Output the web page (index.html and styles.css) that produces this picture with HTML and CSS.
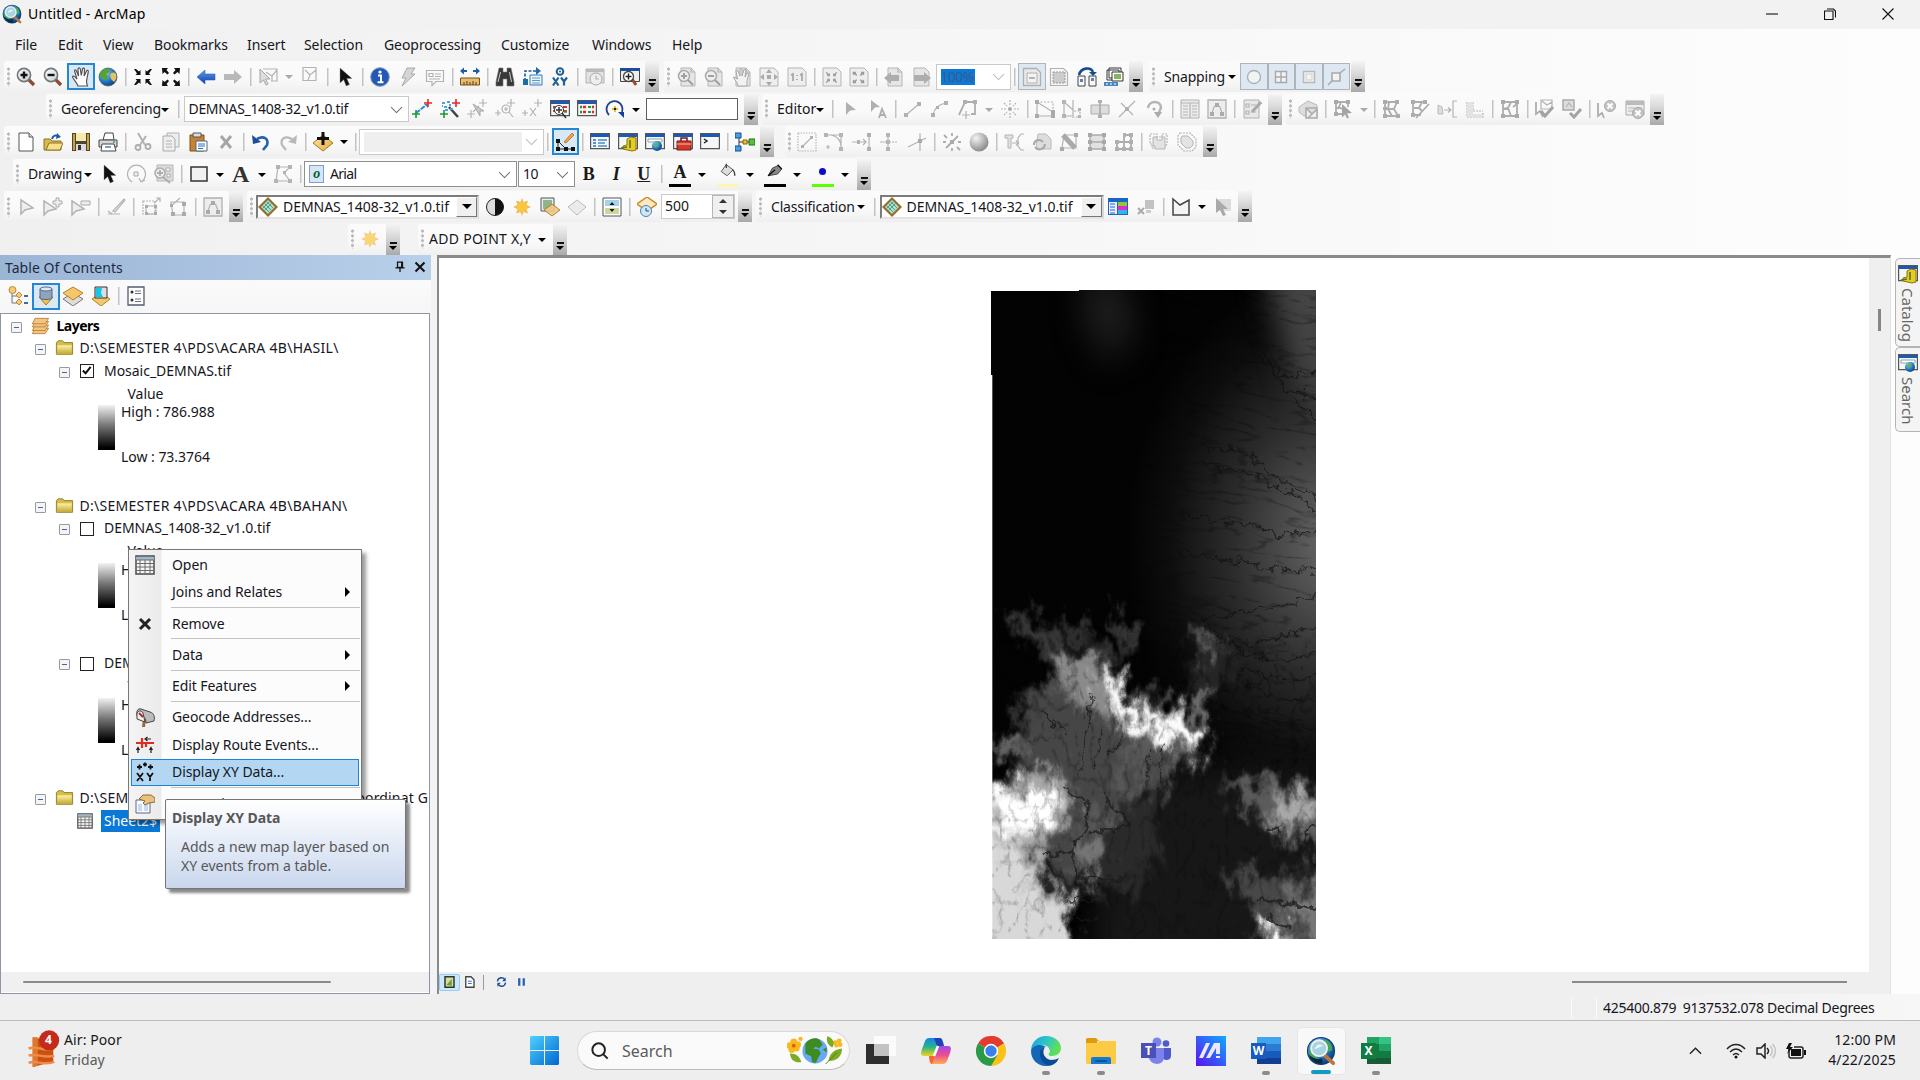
FILE: index.html
```html
<!DOCTYPE html>
<html lang="en">
<head>
<meta charset="utf-8">
<title>Untitled - ArcMap</title>
<link rel="stylesheet" href="styles.css">
</head>
<body>
<svg class="sprite" aria-hidden="true">
<defs>
<linearGradient id="gold" x1="0" y1="0" x2="1" y2="1"><stop offset="0" stop-color="#ffe9a8"/><stop offset="1" stop-color="#e2a93c"/></linearGradient>
<linearGradient id="lens" x1="0" y1="0" x2="1" y2="1"><stop offset="0" stop-color="#fff"/><stop offset="1" stop-color="#c4d0d8"/></linearGradient>
<linearGradient id="fold" x1="0" y1="0" x2="0" y2="1"><stop offset="0" stop-color="#fbf3a8"/><stop offset="1" stop-color="#c9ab36"/></linearGradient>
<radialGradient id="earth" cx=".35" cy=".3" r=".8"><stop offset="0" stop-color="#8fd0f5"/><stop offset=".6" stop-color="#1f70bd"/><stop offset="1" stop-color="#0b3570"/></radialGradient>
<radialGradient id="ball" cx=".35" cy=".3" r=".7"><stop offset="0" stop-color="#f4f4f4"/><stop offset="1" stop-color="#8d8d8d"/></radialGradient>
<linearGradient id="arr" x1="0" y1="0" x2="0" y2="1"><stop offset="0" stop-color="#5f9cf0"/><stop offset="1" stop-color="#0d3fa5"/></linearGradient>
</defs>
<symbol id="zin" viewBox="0 0 20 20"><path d="M12 12l6 6" stroke="#8e4a36" stroke-width="3.4"/><circle cx="8" cy="8" r="6.6" fill="url(#lens)" stroke="#777" stroke-width="1.6"/><path d="M8 4.5v7M4.5 8h7" stroke="#111" stroke-width="2.4"/></symbol>
<symbol id="zout" viewBox="0 0 20 20"><path d="M12 12l6 6" stroke="#8e4a36" stroke-width="3.4"/><circle cx="8" cy="8" r="6.6" fill="url(#lens)" stroke="#777" stroke-width="1.6"/><path d="M4.5 8h7" stroke="#111" stroke-width="2.4"/></symbol>
<symbol id="hand" viewBox="0 0 20 20"><path d="M7 19C6 15 1 11 1.500 9.500c1-1.200 3 .7 4.500 2.500L3.500 4C3.500 2.500 5 2.500 5.500 4l2 5L7 2c.3-1.500 2-1.500 2.300 0l1 6.500L11.500 2c.5-1.500 2-1 2 .3L13.200 9l2.300-5c.8-1.200 2-.6 1.800.7L15.500 14c0 2 .5 3 1 5z" fill="#fff" stroke="#555" stroke-width="1.200"/></symbol>
<symbol id="globe" viewBox="0 0 20 20"><circle cx="10" cy="10" r="9" fill="url(#earth)" stroke="#4d5d6e" stroke-width=".8"/><path d="M3 5c3-4 8-4 9-2l-2 3-2 1 2 2-1 3-3 1c-2-2-4-4-4-7z" fill="#58a32c"/><path d="M12 8c2-3 4-3 6-1 1 3 0 6-2 8l-3-3z" fill="#e4c45c"/></symbol>
<symbol id="fixin" viewBox="0 0 20 20"><path d="M1 2h2l3 2.500L7.500 3v5h-5L4 6.500zM19 2h-2l-3 2.500L12.500 3v5h5L16 6.500zM1 18h2l3-2.500L7.500 17v-5h-5L4 13.500zM19 18h-2l-3-2.500L12.500 17v-5h5L16 13.500z" fill="currentColor"/></symbol>
<symbol id="fixout" viewBox="0 0 20 20"><path d="M1 1h6L5.500 3 8 6 6.500 7.500 3.500 5 1.500 7zM19 1h-6l1.500 2L12 6l1.500 1.500 3-2.500 2 2zM1 19h6l-1.500-2L8 14l-1.500-1.500-3 2.500-2-2zM19 19h-6l1.500-2-2.500-3 1.500-1.500 3 2.500 2-2z" fill="currentColor"/></symbol>
<symbol id="back" viewBox="0 0 20 20"><path d="M1 10l8-7v4h10v6H9v4z" fill="url(#arr)" stroke="#3167bd" stroke-width=".6"/></symbol>
<symbol id="fwd" viewBox="0 0 20 20"><path d="M19 10l-8-7v4H1v6h10v4z" fill="#b9b9b9"/></symbol>
<symbol id="selfeat" viewBox="0 0 20 20"><path d="M5 2h14v12h-6M8 5l6 4 5-6M14 9v5" class="g"/><path d="M2 2v14l3.500-3 2.500 5 2-1-2.500-5H12z" fill="#ddd" stroke="#a5a5a5"/></symbol>
<symbol id="clear" viewBox="0 0 20 20"><path d="M3 .5h13v13H3zM5 3l5 5 6-5M10 8l-2 5" class="g"/></symbol>
<symbol id="cursor" viewBox="0 0 20 20"><path d="M5 1v15l3.700-3.300 2.500 6.300 3.300-1.500-2.700-6H17z" fill="#111" stroke="#888" stroke-width=".4"/></symbol>
<symbol id="info" viewBox="0 0 20 20"><circle cx="10" cy="10" r="9.300" fill="#2358b4" stroke="#7f99c4"/><path d="M8 8.500h3V15M7.500 15.300h6" stroke="#fff" stroke-width="2" fill="none"/><circle cx="10" cy="5" r="1.600" fill="#fff"/></symbol>
<symbol id="bolt" viewBox="0 0 20 20"><path d="M9 1h8l-4 6h4L4 19l4-8H4z" fill="#d5d5d5" stroke="#a9a9a9"/></symbol>
<symbol id="note" viewBox="0 0 20 20"><path d="M1.500 3.500h17v11H11l-4 4v-4H1.500z" class="g" fill="#e4e4e4"/><path d="M4 6.500h4v3H4zM10 7h6M10 9.500h6M4 12h11" class="g"/></symbol>
<symbol id="measure" viewBox="0 0 20 20"><path d="M0 4l4-3.500v2.500h3v2H4v2.500zM20 4l-4-3.500v2.500h-3v2h3v2.500z" fill="#1b5da6"/><path d="M.5 11h19v7H.5z" fill="#e7bd70" stroke="#79501c"/><path d="M4 18v-3M7 18v-4M10 18v-3M13 18v-4M16 18v-3" stroke="#5b3b10"/></symbol>
<symbol id="binoc" viewBox="0 0 20 20"><path d="M4 1h4v4h4V1h4l3 14v4h-7v-7H8v7H1v-4z" fill="#383838" stroke="#777" stroke-width=".6"/><path d="M5.500 5L3 15M14.500 5l2 10" stroke="#ccc"/></symbol>
<symbol id="route" viewBox="0 0 20 20"><path d="M2 14V4h12" fill="none" stroke="#1d5a96" stroke-width="1.600" stroke-dasharray="3 1.500"/><path d="M13 0l5 4-5 4zM0 12h5v6H0z" fill="#1d6ca8"/><path d="M7 8h12v10H7z" fill="#e9f4fb" stroke="#317bb0"/><path d="M9 11h8M9 13.500h8M9 16h8" stroke="#5b9ac0"/></symbol>
<symbol id="goxy" viewBox="0 0 20 20"><circle cx="10" cy="4.500" r="3.300" fill="none" stroke="#1f5f96" stroke-width="2"/><circle cx="10" cy="4.500" r="1" fill="#1f5f96"/><path d="M3 10.500l5.500 8M8.500 10.500l-5.500 8M11 10.500l3 4 3-4M14 14v4.500" stroke="#1f5f96" stroke-width="2.200" fill="none"/></symbol>
<symbol id="clock" viewBox="0 0 20 20"><path d="M1 2h18v14H1z" fill="#e2e2e2" stroke="#b2b2b2"/><path d="M1 2h18v3H1z" fill="#bbb"/><circle cx="11" cy="12" r="6" fill="#eee" stroke="#aaa"/><path d="M11 8.500V12h3" class="g"/></symbol>
<symbol id="viewer" viewBox="0 0 20 20"><path d="M.5 1.500h19v13H.5z" fill="#eee" stroke="#444"/><path d="M0 1h20v3H0z" fill="#1b4f9c"/><path d="M12 12l4 6" stroke="#984b33" stroke-width="3"/><circle cx="8.500" cy="9.500" r="5" fill="#fff" stroke="#444" stroke-width="1.300"/><path d="M8.500 6.500v6M5.500 9.500h6" stroke="#222" stroke-width="1.500"/></symbol>
<symbol id="pg" viewBox="0 0 20 20"><path d="M4 1h10l4 4v14H4z" fill="#e6e6e6" stroke="#b5b5b5"/><path d="M14 1v4h4" class="g"/></symbol>
<symbol id="pgin" viewBox="0 0 20 20"><use href="#pg"/><circle cx="7" cy="9" r="5.500" fill="#eee" stroke="#aaa" stroke-width="1.500"/><path d="M7 6v6M4 9h6M11 13l5 5" stroke="#a0a0a0" stroke-width="2"/></symbol>
<symbol id="pgout" viewBox="0 0 20 20"><use href="#pg"/><circle cx="7" cy="9" r="5.500" fill="#eee" stroke="#aaa" stroke-width="1.500"/><path d="M4 9h6M11 13l5 5" stroke="#a0a0a0" stroke-width="2"/></symbol>
<symbol id="pghand" viewBox="0 0 20 20"><use href="#pg"/><path d="M6 19c0-4-4-6-4.500-9l4 2L4 4l2-.5L8 9V2h2v7l2-6.500 2 .5-1 7 2-4 2 .5-2 7v5.500z" fill="#f2f2f2" stroke="#a8a8a8"/></symbol>
<symbol id="pgfull" viewBox="0 0 20 20"><path d="M1 1h14l4 4v14H1z" fill="#eee" stroke="#b5b5b5"/><path d="M10 2l3 4H7zM10 19l3-4H7zM1 10l4-3v6zM19 10l-4-3v6zM8 8h4v4H8z" fill="#aaa"/></symbol>
<symbol id="pg11" viewBox="0 0 20 20"><path d="M1 1h14l4 4v14H1z" fill="#eee" stroke="#b5b5b5"/><path d="M4 8l2-1v7M10 8v1M10 12v1M13 8l2-1v7" stroke="#a5a5a5" stroke-width="1.700" fill="none"/></symbol>
<symbol id="pgfi" viewBox="0 0 20 20"><path d="M1 1h14l4 4v14H1z" fill="#eee" stroke="#b5b5b5"/><g color="#999"><use href="#fixin" x="3" y="4" width="13" height="13"/></g></symbol>
<symbol id="pgfo" viewBox="0 0 20 20"><path d="M1 1h14l4 4v14H1z" fill="#eee" stroke="#b5b5b5"/><g color="#999"><use href="#fixout" x="3" y="4" width="13" height="13"/></g></symbol>
<symbol id="pgb" viewBox="0 0 20 20"><use href="#pg"/><path d="M0 11l7-6v3h8v6H7v3z" fill="#adadad"/></symbol>
<symbol id="pgf" viewBox="0 0 20 20"><path d="M2 1h11l4 4v14H2z" fill="#e6e6e6" stroke="#b5b5b5"/><path d="M19 11l-7-6v3H2v6h10v3z" fill="#adadad"/></symbol>
<symbol id="draft" viewBox="0 0 20 20"><path d="M1.500 1.500h13l4 4v13h-17z" fill="#e9e9e9" stroke="#b0b0b0" stroke-width="1.300"/><path d="M5 6h10v10H5z" fill="#f3f3f3" stroke="#b0b0b0"/><path d="M7 11h6" class="g2"/></symbol>
<symbol id="focus" viewBox="0 0 20 20"><path d="M1.500 1.500h13l4 4v13h-17z" class="g"/><path d="M4 5h12v11H4z" fill="#ccc" stroke="#999" stroke-dasharray="2 1"/></symbol>
<symbol id="chlay" viewBox="0 0 20 20"><path d="M2 8C4 0 14 0 16 5" fill="none" stroke="#174d8c" stroke-width="2.600"/><path d="M12 5h8l-4 4z" fill="#174d8c"/><path d="M1 9h7v10H1zM12 9h7v10h-7z" fill="#f8f8f8" stroke="#444"/><path d="M3 12h3v3H3zM14 11h3v3h-3z" fill="#5b83ae"/></symbol>
<symbol id="ddp" viewBox="0 0 20 20"><path d="M5 1h12v10H5zM3 3h12v10H3z" fill="#fff" stroke="#333"/><path d="M8 5h11v9H8z" fill="#fff" stroke="#333"/><path d="M10 7h7v5h-7z" fill="#80b65f"/><path d="M0 15h14v4H0z" fill="#4a86c6"/><path d="M2 17h2M6 17h2M10 17h2" stroke="#fff"/></symbol>
<symbol id="sncirc" viewBox="0 0 20 20"><circle cx="10" cy="10" r="6.500" fill="#f1f3f5" stroke="#a9adb0" stroke-width="1.300"/></symbol>
<symbol id="sngrid" viewBox="0 0 20 20"><path d="M4.500 4.500h11v11h-11zM4.500 10h11M10 4.500v11" fill="#f3f3f3" stroke="#a9a9a9" stroke-width="1.400"/></symbol>
<symbol id="snsq" viewBox="0 0 20 20"><path d="M4.500 4.500h11v11h-11z" fill="#f3f3f3" stroke="#b9b9b9" stroke-width="1.500"/><path d="M7 7h6v6H7z" fill="#f3f3f3" stroke="#cfcfcf"/></symbol>
<symbol id="snedge" viewBox="0 0 20 20"><path d="M6 6h8v8H6zM14 6l5-4M6 14l-4 4" fill="#f3f3f3" stroke="#a9a9a9" stroke-width="1.600"/></symbol>
<symbol id="cp" viewBox="0 0 20 20"><path d="M4 14l9-7" stroke="#2f86c8" stroke-width="2" stroke-dasharray="5 1"/><path d="M12 5h4v4z" fill="#2f86c8"/><path d="M0 15h8M4 11v8" stroke="#1a9a30" stroke-width="1.600"/><path d="M12 4h8M16 0v8" stroke="#e52828" stroke-width="1.600"/></symbol>
<symbol id="wand" viewBox="0 0 20 20"><path d="M9 8l9 10" stroke="#444" stroke-width="2.600"/><path d="M2 4h3M7 3h3M4 8h3M9 6h2M5 11h3M10 10h3M2 7h1" stroke="#49a4df" stroke-width="2"/><path d="M0 15h8M4 11v8" stroke="#1a9a30" stroke-width="1.600"/><path d="M12 4h8M16 0v8" stroke="#e52828" stroke-width="1.600"/></symbol>
<symbol id="gcp" viewBox="0 0 20 20"><path d="M0 15h8M4 11v8M12 4h8M16 0v8M6 13l6-6" class="g"/><path d="M6 5l7 12v-5h4z" fill="#c8c8c8" stroke="#aaa"/></symbol>
<symbol id="gcpz" viewBox="0 0 20 20"><path d="M0 14h6M3 11v6M12 4h8M16 0v8" class="g"/><circle cx="11" cy="10" r="4" class="g"/><path d="M9 10h4M11 8v4M14 13l4 5" class="g"/></symbol>
<symbol id="gcpx" viewBox="0 0 20 20"><path d="M0 14h6M3 11v6M12 4h8M16 0v8M8 9l6 8M14 9l-6 8" class="g"/></symbol>
<symbol id="win" viewBox="0 0 20 20"><path d="M.6 1.600h18.800v15H.6z" fill="#f4f6f8" stroke="#555" stroke-width="1.200"/><path d="M1 2h18v3H1z" fill="#1d58b4"/></symbol>
<symbol id="gvz" viewBox="0 0 20 20"><use href="#win"/><path d="M3 8h4M13 8h4M3 12h4M13 12h4" stroke="#d33" stroke-width="2"/><path d="M3 9h3M14 13h3" stroke="#2a2" stroke-width="1.500"/><circle cx="9" cy="11" r="4.500" fill="#fff" stroke="#333"/><path d="M9 8v6M6 11h6M12 14l4 5" stroke="#333" stroke-width="1.500"/></symbol>
<symbol id="gtab" viewBox="0 0 20 20"><use href="#win"/><path d="M3 8h2M3 13h2" stroke="#1a9a30" stroke-width="2.500"/><path d="M6 8h3M6 13h3M15 8h2M15 13h2" stroke="#e22" stroke-width="2.500"/><path d="M11 8h3M11 13h3" stroke="#1a9a30" stroke-width="2"/></symbol>
<symbol id="rot" viewBox="0 0 20 20"><path d="M4 16A8 8 0 1 1 17 13" fill="none" stroke="#24418c" stroke-width="1.800"/><path d="M13 13h6v6z" fill="#123fa0"/><path d="M7 10h6M10 7v6" stroke="#ddb200" stroke-width="1.500"/><path d="M9 9h2v2H9z" fill="#222"/></symbol>
<symbol id="etool" viewBox="0 0 20 20"><path d="M6 3l10 8-6 .5L6 16z" fill="#b0b0b0"/></symbol>
<symbol id="eann" viewBox="0 0 20 20"><path d="M3 1l9 7-5 .5L3 13z" fill="#b0b0b0"/><path d="M11 19l3-9 4 9M12 16h5" class="g2"/></symbol>
<symbol id="line" viewBox="0 0 20 20"><path d="M3 16L16 5" class="g"/><path d="M1 14h4v4H1zM14 3h4v4h-4z" fill="#b0b0b0"/></symbol>
<symbol id="arc" viewBox="0 0 20 20"><path d="M3 16Q5 6 16 4" class="g"/><path d="M1 14h4v4H1zM14 2h4v4h-4zM6 7h3v3H6z" fill="#b0b0b0"/></symbol>
<symbol id="trace" viewBox="0 0 20 20"><path d="M1 16l6-13h10v12h-4" class="g2"/><path d="M8 12v8M4 16h8" class="g"/><path d="M5 1h4v4H5zM15 1h4v4h-4z" fill="#b0b0b0"/></symbol>
<symbol id="point" viewBox="0 0 20 20"><path d="M10 1v5M10 14v5M1 10h5M14 10h5M4 4l3 3M16 4l-3 3M4 16l3-3M16 16l-3-3" class="g" stroke-dasharray="2 1"/><circle cx="10" cy="10" r="2" fill="#aaa"/></symbol>
<symbol id="verts" viewBox="0 0 20 20"><path d="M2 3v14h16V13L2 3" class="g"/><path d="M2 3h16v10" class="g" stroke-dasharray="2 1.500"/><path d="M0 1h4v4H0zM0 15h4v4H0zM16 11h4v4h-4zM16 15h4v4h-4z" fill="#aaa"/></symbol>
<symbol id="resh" viewBox="0 0 20 20"><path d="M2 3v14h8M2 3l9 8M11 1v18" class="g"/><path d="M12 12h6v6h-6" class="g" stroke-dasharray="2 1.500"/><path d="M0 1h4v4H0zM0 15h4v4H0zM16 9h3v3h-3zM16 16h3v3h-3z" fill="#b4b4b4"/></symbol>
<symbol id="cutp" viewBox="0 0 20 20"><path d="M1 6h18v9H1z" fill="#ddd" stroke="#aaa"/><path d="M10 1v18" class="g2"/><path d="M8 1h4v3H8zM8 16h4v3H8z" fill="#b0b0b0"/></symbol>
<symbol id="split" viewBox="0 0 20 20"><path d="M2 18L18 2" class="g"/><path d="M4 4l4 4M12 12l4 4" class="g"/><path d="M8 8h4v4H8z" fill="#b0b0b0"/></symbol>
<symbol id="rotg" viewBox="0 0 20 20"><path d="M3 9C4 1 16 1 16 9l-3 6" fill="none" stroke="#b5b5b5" stroke-width="2.500"/><path d="M9 13h8l-4 6z" fill="#aaa"/><circle cx="9" cy="10" r="1.500" fill="#aaa"/></symbol>
<symbol id="attr" viewBox="0 0 20 20"><path d="M1 1h18v18H1z" fill="#ececec" stroke="#b0b0b0"/><path d="M1 4h18M10 4v15M3 7h5M3 10h5M3 13h5M3 16h5M12 7h5M12 10h5M12 13h5M12 16h5" class="g"/></symbol>
<symbol id="sketch" viewBox="0 0 20 20"><path d="M1 1h18v18H1z" fill="#ededed" stroke="#b0b0b0" stroke-width="1.300"/><path d="M5 14l2-6 3-3 3 3 2 6" class="g"/><path d="M3 13h4v4H3zM8 4h4v4H8zM13 13h4v4h-4z" fill="#aaa"/></symbol>
<symbol id="feat" viewBox="0 0 20 20"><path d="M2 1h15v18H2z" fill="#e8e8e8" stroke="#b0b0b0"/><path d="M4 5h3v3H4zM4 12h3v3H4zM9 6h5M9 13h5" class="g"/><path d="M10 13L19 3" stroke="#aaa" stroke-width="3"/></symbol>
<symbol id="topo" viewBox="0 0 20 20"><path d="M1 8l9-6 9 4v11H6l-5-4z" fill="#ddd" stroke="#bbb"/><path d="M8 9h11v10H8zM8 9l6 6 5-5M14 15l-4 4" fill="#eee" stroke="#aaa" stroke-width="1.500"/></symbol>
<symbol id="tpsel" viewBox="0 0 20 20"><path d="M3 3h12M3 3v12h6M8 3l-2 5 3 2M15 3v5M3 9h4" class="g2"/><path d="M1 1h4v4H1zM13 1h4v4h-4zM1 13h4v4H1z" fill="#aaa"/><path d="M9 5l10 9-5 .5 2 4-2 1-2-4-3 3z" fill="#a5a5a5"/></symbol>
<symbol id="tpnet" viewBox="0 0 20 20"><path d="M3 3h12l-3 7 4 7H3zM3 10h9M7 3l-1 7 4 7" class="g2"/><path d="M1 1h4v4H1zM1 15h4v4H1zM13 1h4v4h-4zM14 15h4v4h-4zM1 8h4v3H1z" fill="#acacac"/></symbol>
<symbol id="tpcut" viewBox="0 0 20 20"><path d="M3 3h12M3 3v13h8M4 9h5l3-6M9 9l3 3M6 19l13-14" class="g2"/><path d="M1 1h4v4H1zM13 1h4v4h-4zM1 14h4v4H1z" fill="#acacac"/></symbol>
<symbol id="align" viewBox="0 0 20 20"><path d="M1 15V6l4 2 1 7z" fill="#ddd" stroke="#bbb"/><path d="M7 11h6M11 8.500l3 2.500-3 2.500M20 2h-4v16h4" class="g"/></symbol>
<symbol id="lsh" viewBox="0 0 20 20"><path d="M2 3v15h16v-5M8 3v9h10" class="g" stroke-dasharray="2 1"/><path d="M2 3v15h15v-3H8V3z" fill="#e3e3e3"/></symbol>
<symbol id="box" viewBox="0 0 20 20"><path d="M3 3h14v14H3zM3 10l5-1 3-6M8 9l3 8M13 8l4-3" class="g2"/><path d="M1 1h4v4H1zM15 1h4v4h-4zM1 15h4v4H1zM15 15h4v4h-4z" fill="#aaa"/></symbol>
<symbol id="val" viewBox="0 0 20 20"><path d="M6 1h11v9H6zM7 2l5 4 5-3" class="g"/><path d="M1 3v12l4-3 3 6" class="g2"/><path d="M6 12l4 5 8-9" fill="none" stroke="#a3a3a3" stroke-width="3"/></symbol>
<symbol id="val2" viewBox="0 0 20 20"><path d="M1 1h11v10H1z" fill="#ddd" stroke="#a9a9a9" stroke-width="1.500"/><path d="M4 8l3-4 3 4" class="g"/><path d="M8 14l4 4 7-8" fill="none" stroke="#a3a3a3" stroke-width="3"/></symbol>
<symbol id="err" viewBox="0 0 20 20"><path d="M1 4v13l4-3 2 5" class="g2"/><circle cx="13" cy="7" r="5.500" fill="#c4c4c4" stroke="#aaa"/><path d="M10.500 4.500l5 5M15.500 4.500l-5 5" stroke="#fff" stroke-width="2"/></symbol>
<symbol id="errw" viewBox="0 0 20 20"><path d="M1 2h18v14H1z" fill="#eee" stroke="#aaa"/><path d="M1 2h18v4H1z" fill="#bbb"/><path d="M3 9h7M3 12h5M12 9h5" class="g"/><circle cx="13" cy="14" r="5.500" fill="#c4c4c4" stroke="#aaa"/><path d="M10.500 11.500l5 5M15.500 11.500l-5 5" stroke="#fff" stroke-width="2"/></symbol>
<symbol id="new" viewBox="0 0 20 20"><path d="M3 1h10l4 4v14H3z" fill="#fff" stroke="#555"/><path d="M13 1v4h4" fill="#cfe3f5" stroke="#555"/></symbol>
<symbol id="open" viewBox="0 0 20 20"><path d="M1 7h6l2 2h9v9H1z" fill="#d9b94e" stroke="#8d7424"/><path d="M3 18l3-7h14l-3 7z" fill="#f6e08a" stroke="#8d7424"/><path d="M9 7c1-4 4-4 6-3" fill="none" stroke="#1a5ca8" stroke-width="2"/><path d="M14 1l4 4-5 2z" fill="#1a5ca8"/></symbol>
<symbol id="save" viewBox="0 0 20 20"><path d="M1 1h18v18H1z" fill="#4c4732"/><path d="M5 1h10v8H5z" fill="#f7e9b0"/><path d="M5 12h10v7H5z" fill="#dcdcdc"/><path d="M7 13h3v5H7z" fill="#333"/><path d="M2 2h2v16H2zM16 2h2v16h-2z" fill="#c9a23a"/></symbol>
<symbol id="print" viewBox="0 0 20 20"><path d="M5 8l2-7h8l1 7z" fill="#fff" stroke="#444"/><path d="M1 8h18v7H1z" fill="#d6d6d6" stroke="#444"/><path d="M4 12h12l2 7H3z" fill="#fff" stroke="#444"/><path d="M7 15h6M15 10h2" stroke="#48a" stroke-width="1.500"/></symbol>
<symbol id="cut" viewBox="0 0 20 20"><path d="M5 1l7 12M13 4L7 13" stroke="#b3b3b3" stroke-width="2"/><circle cx="5" cy="15.500" r="2.500" class="g2"/><circle cx="15" cy="14.500" r="2.500" class="g2"/></symbol>
<symbol id="copy" viewBox="0 0 20 20"><path d="M6 1h12v14H6z" fill="#eee" stroke="#b0b0b0"/><path d="M2 4h9l3 3v12H2z" fill="#eee" stroke="#aaa"/><path d="M5 9h6M5 12h6M5 15h6" class="g"/></symbol>
<symbol id="paste" viewBox="0 0 20 20"><path d="M2 3h14v16H2z" fill="#c48435" stroke="#7d4e16"/><path d="M5 1h8v4H5z" fill="#ddd" stroke="#555"/><path d="M8 9h11v10H8z" fill="#fff" stroke="#567"/><path d="M10 12h7M10 14h7M10 16.500h5" stroke="#2a72b8"/></symbol>
<symbol id="xg" viewBox="0 0 20 20"><path d="M5 4l10 12M15 4L5 16" stroke="#a6a6a6" stroke-width="3"/></symbol>
<symbol id="undo" viewBox="0 0 20 20"><path d="M6 7c7-4 12 0 10 6l-4 5" fill="none" stroke="#2262ae" stroke-width="2.600"/><path d="M1 3l1 9 8-2z" fill="#1d4c98"/></symbol>
<symbol id="redo" viewBox="0 0 20 20"><path d="M14 7C7 3 2 7 4 13l4 5" fill="none" stroke="#b8b8b8" stroke-width="2.200"/><path d="M19 3l-1 9-8-2z" fill="#b8b8b8"/></symbol>
<symbol id="add" viewBox="0 0 20 20"><path d="M10 3l10 8-10 8L0 11z" fill="url(#gold)" stroke="#a37822"/><path d="M10 0v13M4 6.500h12" stroke="#111" stroke-width="3"/></symbol>
<symbol id="edtb" viewBox="0 0 20 20"><path d="M3 9v8h14M3 9l8 8" fill="none" stroke="#222"/><path d="M1 7h4v4H1zM1 15h4v4H1zM9 15h4v4H9zM16 15h4v4h-4z" fill="#111"/><path d="M9 10L17 1l2 2-8 8z" fill="#f1a73a" stroke="#a05b2a" stroke-width=".7"/></symbol>
<symbol id="toc" viewBox="0 0 20 20"><use href="#win"/><path d="M3 8h3M3 11h3M3 14h3" stroke="#1c73c9" stroke-width="1.700"/><path d="M8 8h9M8 11h7M8 14h9" stroke="#4a8ec8" stroke-width="1.300"/></symbol>
<symbol id="cat" viewBox="0 0 20 20"><use href="#win"/><path d="M9 7l4-2 5 1v12l-4 1-9-2v-3l4-1z" fill="#e9ca20" stroke="#8c7408"/><path d="M12 8v8M3 16l6-1" stroke="#4a7b2c" stroke-width="1.600"/></symbol>
<symbol id="srch" viewBox="0 0 20 20"><use href="#win"/><path d="M3 7h14v3H3z" fill="#fff" stroke="#8aa"/><circle cx="12" cy="14" r="5" fill="url(#earth)"/><path d="M9 13c1-3 4-3 5-2l-3 4z" fill="#63b443"/></symbol>
<symbol id="tbx" viewBox="0 0 20 20"><use href="#win"/><path d="M4 9h14v9H4z" fill="#cf3a2c" stroke="#79170f"/><path d="M8 9V6h6v3" fill="none" stroke="#79170f" stroke-width="1.500"/><path d="M4 12h14" stroke="#ffb9a8"/></symbol>
<symbol id="py" viewBox="0 0 20 20"><use href="#win"/><path d="M4 7l3 2-3 2" fill="none" stroke="#222" stroke-width="1.500"/></symbol>
<symbol id="model" viewBox="0 0 20 20"><path d="M4 3v14M4 10h14" stroke="#333"/><path d="M0 1h6v5H0zM0 14h6v5H0z" fill="#46a0e8" stroke="#164d86"/><path d="M8 8h4v4H8z" fill="#f2c230" stroke="#8a6200"/><path d="M14 7h6v6h-6z" fill="#5bbd45" stroke="#22711a"/></symbol>
<symbol id="sbox" viewBox="0 0 20 20"><path d="M1 1h18v18H1z" class="g" stroke-dasharray="1.500 1.200"/><path d="M5 15L15 5" class="g"/><path d="M4 13h3v3H4zM13 4h3v3h-3z" fill="#b0b0b0"/></symbol>
<symbol id="fil" viewBox="0 0 20 20"><path d="M2 3h15v14M7 3q10 2 10 12" class="g"/><path d="M0 1h4v4H0zM15 1h4v4h-4zM15 15h4v4h-4z" fill="#b5b5b5"/><path d="M4 13v4M2 15h4" class="g"/></symbol>
<symbol id="ext" viewBox="0 0 20 20"><path d="M0 10h6M8 10h6M11 7l3 3-3 3M17 2v16" class="g"/><path d="M5 8h3v4H5zM15 1h4v4h-4zM15 15h4v4h-4z" fill="#b0b0b0"/></symbol>
<symbol id="trim" viewBox="0 0 20 20"><path d="M9 2v16M1 10h9" class="g"/><path d="M10 10h9" class="g" stroke-dasharray="2 1"/><path d="M7 1h4v4H7zM7 8h4v4H7zM7 15h4v4H7z" fill="#b5b5b5"/></symbol>
<symbol id="inter" viewBox="0 0 20 20"><path d="M1 15L19 6M13 1v18" class="g"/><path d="M11 7h4v4h-4z" fill="#aaa"/></symbol>
<symbol id="expl" viewBox="0 0 20 20"><path d="M4 16L16 4M10 1v3M10 16v3M1 10h3M16 10h3M2 3l3 3M15 15l3 3" class="g2"/><path d="M8 8h4v4H8z" fill="#aaa"/></symbol>
<symbol id="sph" viewBox="0 0 20 20"><circle cx="10" cy="10" r="9.500" fill="url(#ball)"/></symbol>
<symbol id="gen" viewBox="0 0 20 20"><path d="M1 3h8v3H7v10H4V6H1z" fill="#e3e3e3" stroke="#b3b3b3"/><path d="M20 2h-3l-3 4v8l3 4h3" class="g"/><path d="M8 11h6M12 8.500l2.500 2.500-2.500 2.500" class="g"/></symbol>
<symbol id="sync" viewBox="0 0 20 20"><path d="M6 2h8l5 5v10H4z" fill="#ddd" stroke="#bbb"/><path d="M2 13c0-6 7-6 9-3M13 12c-1 7-8 6-10 3" fill="none" stroke="#aaa" stroke-width="2.200"/></symbol>
<symbol id="wrench" viewBox="0 0 20 20"><path d="M5 3h12v13H3z" class="g"/><path d="M4 3l12 13" stroke="#aaa" stroke-width="5"/><path d="M15 1h4v4h-4zM1 15h4v4H1z" fill="#aaa"/></symbol>
<symbol id="rows" viewBox="0 0 20 20"><path d="M3 3h14v14H3zM3 10h14" fill="#e1e1e1" stroke="#aaa" stroke-width="1.400"/><path d="M1 1h4v4H1zM15 1h4v4h-4zM1 8h4v4H1zM15 8h4v4h-4zM1 15h4v4H1zM15 15h4v4h-4z" fill="#a8a8a8"/></symbol>
<symbol id="steps" viewBox="0 0 20 20"><path d="M10 3h7v14H3v-7h14M10 3v14" class="g2"/><path d="M9 1h3v4H9zM15 1h4v4h-4zM15 8h4v4h-4zM15 15h4v4h-4zM1 8h4v4H1zM1 15h4v4H1zM8 15h4v4H8z" fill="#b0b0b0"/></symbol>
<symbol id="blob" viewBox="0 0 20 20"><path d="M1 2h7v3h5V2h5v10l-3 4H3v-4H1z" class="g" stroke-dasharray="2 1"/><path d="M4 5h4v3h5V5h3v12H6v-3H4z" fill="#e3e3e3" stroke="#b5b5b5"/></symbol>
<symbol id="blob2" viewBox="0 0 20 20"><path d="M3 1h10l6 6v8l-4 4H7l-6-6V4z" class="g" stroke-dasharray="2 1"/><path d="M5 4h6l5 5v4l-3 3H9L4 11V6z" fill="#e3e3e3" stroke="#b5b5b5"/></symbol>
<symbol id="rotc" viewBox="0 0 20 20"><path d="M6 18A9 9 0 1 1 15 18M13 14l2 4 4-2" class="g"/><path d="M8 8h4v4H8z" fill="#eee" stroke="#aaa"/></symbol>
<symbol id="zsel" viewBox="0 0 20 20"><path d="M3 1h16v16H3z" fill="#ddd" stroke="#b5b5b5"/><circle cx="6" cy="9" r="5" fill="#eee" stroke="#aaa" stroke-width="1.500"/><path d="M3 9h6M6 6v6M9 13l7 6" class="g2"/><path d="M12 4h4v3h-4zM13 10h3v3h-3z" fill="#fff" stroke="#aaa"/></symbol>
<symbol id="rect" viewBox="0 0 20 20"><path d="M2 3h16v14H2z" fill="#f1f1f1" stroke="#333" stroke-width="1.500"/></symbol>
<symbol id="edv" viewBox="0 0 20 20"><path d="M3 17L5 3h12L11 9l6 8zM3 17" class="g"/><path d="M1 15h4v4H1zM3 1h4v4H3zM15 1h4v4h-4zM15 15h4v4h-4zM10 7h3v3h-3z" fill="#b4b4b4"/></symbol>
<symbol id="bucket" viewBox="0 0 20 20"><path d="M8 2l8 6-7 7-7-5z" fill="#ddd" stroke="#444"/><path d="M8 6V1M15 8c3 1 3 4 3 7" fill="none" stroke="#444" stroke-width="1.600"/></symbol>
<symbol id="pen" viewBox="0 0 20 20"><path d="M2 15L7 6l7-3 4 4-5 6z" fill="#888" stroke="#333"/><path d="M2 15l8-7M13 2l5 5" stroke="#111" stroke-width="1.600"/></symbol>
<symbol id="tri" viewBox="0 0 20 20"><path d="M5 3v14l4-4 8-2z" fill="#eee" stroke="#b2b2b2" stroke-width="1.500"/></symbol>
<symbol id="trip" viewBox="0 0 20 20"><path d="M1 4v14l4-4 8-2z" fill="#eee" stroke="#b2b2b2" stroke-width="1.500"/><path d="M13 1h3v3h3v3h-3v3h-3V7h-3V4h3z" fill="#eee" stroke="#aaa"/></symbol>
<symbol id="trim2" viewBox="0 0 20 20"><path d="M1 4v14l4-4 8-2z" fill="#eee" stroke="#b2b2b2" stroke-width="1.500"/><path d="M10 4h9v4h-9z" fill="#eee" stroke="#aaa"/></symbol>
<symbol id="pencil" viewBox="0 0 20 20"><path d="M2 17h12M7 14L18 2l1 1L9 15z" class="g"/><path d="M2 14l4 3" class="g"/></symbol>
<symbol id="sel1" viewBox="0 0 20 20"><path d="M2 4h12v13H2z" class="g" stroke-dasharray="2 1"/><path d="M5 9h10v8H5zM13 6l6-5M15 1h4v4" class="g"/><path d="M4 8h3v3H4zM13 8h3v3h-3zM4 15h3v3H4zM13 15h3v3h-3z" fill="#aaa"/></symbol>
<symbol id="sel2" viewBox="0 0 20 20"><path d="M3 5h13v13H5zM3 9l9-8" class="g"/><path d="M2 7h3v3H2zM14 5h4v4h-4zM14 15h4v4h-4zM3 15h4v4H3z" fill="#aaa"/></symbol>
<symbol id="raster" viewBox="0 0 20 20"><path d="M10 0l10 10-10 10L0 10z" fill="#9a6c2d"/><path d="M10 3l7 7-7 7-7-7z" fill="#a9e0c6"/><path d="M6.500 6.500l7 7M13.500 6.500l-7 7M4.500 8.500l7 7M8.500 4.500l7 7M11.500 4.500l-7 7" stroke="#3d8f88" stroke-width=".8"/></symbol>
<symbol id="contrast" viewBox="0 0 20 20"><circle cx="10" cy="10" r="8.500" fill="#ddd" stroke="#222"/><path d="M10 1.500a8.500 8.500 0 0 1 0 17z" fill="#111"/></symbol>
<symbol id="sun" viewBox="0 0 20 20"><path d="M10 1l1.600 4 4.400-1.500L14.500 8l4.500 2-4.500 2 1.500 4.500-4.400-1.500L10 19l-1.600-4L4 16.500 5.500 12 1 10l4.500-2L4 3.500 8.400 5z" fill="#f0b95c"/><circle cx="10" cy="10" r="5.300" fill="#f8c73e"/></symbol>
<symbol id="transp" viewBox="0 0 20 20"><path d="M1 1h13v13H1z" fill="#e8eef0" stroke="#555"/><path d="M3 3h9v9H3z" fill="#8fb58a"/><path d="M12 7l8 6-8 6-8-6z" fill="#efc983" stroke="#a8772a" opacity=".9"/></symbol>
<symbol id="swipe" viewBox="0 0 20 20"><path d="M10 3l9 7-9 8-9-8z" fill="#ebebeb" stroke="#bbb"/></symbol>
<symbol id="flick" viewBox="0 0 20 20"><path d="M1 1h18v18H1z" fill="#fff" stroke="#555"/><path d="M3 3h14v6H3z" fill="#a5d3ec"/><path d="M3 11h14v6H3z" fill="#cbd79b"/><path d="M10 5l2.500 3h-5zM10 15l2.500-3h-5z" fill="#111"/></symbol>
<symbol id="flash" viewBox="0 0 20 20"><path d="M10 0l10 7-10 7L0 7z" fill="#ffe9bf" stroke="#c98a2c" stroke-width="1.500"/><circle cx="9" cy="14" r="5.500" fill="#cfe8f7" stroke="#4b83a8"/><path d="M9 11v3h3" stroke="#246" fill="none"/></symbol>
<symbol id="icls" viewBox="0 0 20 20"><path d="M0 1h20v17H0z" fill="#1766c8"/><path d="M1 5h8v12H1z" fill="#eef"/><path d="M2 7h5M2 10h5M2 13h5M2 16h5" stroke="#1766c8"/><path d="M10 5h9v4h-9z" fill="#8fc63a"/><path d="M10 9h9v4h-9z" fill="#e32bd0"/><path d="M10 13h9v4h-9z" fill="#36b6e6"/></symbol>
<symbol id="icl2" viewBox="0 0 20 20"><path d="M9 3h9v9H9z" fill="#c2c2c2"/><path d="M2 11l6 6M8 11l-6 6" stroke="#aaa" stroke-width="2"/><path d="M10 13h5v3h-5z" fill="#ccc"/></symbol>
<symbol id="poly" viewBox="0 0 20 20"><path d="M2 2l7 6 9-5v15H2z" fill="#f4f4f4" stroke="#444" stroke-width="1.500"/></symbol>
<symbol id="pick" viewBox="0 0 20 20"><path d="M5 2h13v12H9z" fill="#ddd"/><path d="M3 1v15l4-3 3 6 3-1-3-6h5z" fill="#a9a9a9"/></symbol>
<symbol id="folder" viewBox="0 0 20 20"><path d="M1 16V4l2-2h5l1.500 2H19v13H1z" fill="#d6bc4b" stroke="#8f7a21"/><path d="M2 7h16v9H2z" fill="url(#fold)"/></symbol>
<symbol id="layers" viewBox="0 0 20 20"><g fill="#f3c583" stroke="#b57a2a" stroke-width=".9"><path d="M1 18.500l3-6h15l-4 6z"/><path d="M1 15l3-6h15l-4 6z"/><path d="M1 11l3-6h15l-4 6z"/><path d="M1 7.500l3-6h15l-4 6z"/></g></symbol>
<symbol id="order" viewBox="0 0 20 20"><path d="M4 6v11h5M4 10h5" fill="none" stroke="#777"/><circle cx="4.500" cy="4" r="3.500" fill="#f6ca7c" stroke="#c08a30"/><path d="M11 6l3 3-3 3-3-3zM11 13l3 3-3 3-3-3z" fill="#f6ca7c" stroke="#c08a30"/><path d="M16 10h4M16 17h4" stroke="#37719a" stroke-width="2"/></symbol>
<symbol id="source" viewBox="0 0 20 20"><path d="M3 11l7 8 7-8z" fill="#f0c157" stroke="#ac7f22"/><path d="M4 3v9c0 2 12 2 12 0V3z" fill="#8da4bd" stroke="#56697e"/><ellipse cx="10" cy="3" rx="6" ry="2" fill="#dfe8f1" stroke="#56697e"/></symbol>
<symbol id="vis" viewBox="0 0 20 20"><path d="M10 7l10 6-10 7L0 13z" fill="#ddd" stroke="#777"/><path d="M10 1l10 6-10 7L0 7z" fill="#f5c66b" stroke="#b5801e"/></symbol>
<symbol id="selby" viewBox="0 0 20 20"><path d="M10 7l9 6-9 7-9-7z" fill="#f5c66b" stroke="#b5801e"/><path d="M4 1h12v11H4z" fill="#ddd" stroke="#333"/><path d="M5 2h6l-1 5 2 4H5z" fill="#10c8e8"/></symbol>
<symbol id="opts" viewBox="0 0 20 20"><path d="M2 1h16v18H2z" fill="#fdfdfd" stroke="#555c70" stroke-width="1.300"/><circle cx="6" cy="6" r="1.500" fill="#333"/><circle cx="6" cy="14" r="1.500" fill="#333"/><path d="M9 5h6M9 7.500h6M9 13h6M9 15.500h6" stroke="#66738e"/></symbol>
<symbol id="table" viewBox="0 0 20 20"><path d="M1 1h18v18H1z" fill="#f5f5f5" stroke="#4b4b4b" stroke-width="1.500"/><path d="M1 2h18v3H1z" fill="#9db8cb"/><path d="M1 5h18M1 8.500h18M1 12h18M1 15.500h18M5 5v14M10 5v14M15 5v14" stroke="#6a6a6a"/></symbol>
<symbol id="remove" viewBox="0 0 20 20"><path d="M5 5l10 10M15 5L5 15" stroke="#222" stroke-width="3"/></symbol>
<symbol id="mail" viewBox="0 0 20 20"><path d="M8 12h3l-1 8H7z" fill="#a0672f"/><path d="M2 9C1 4 3 1 6 2l9 3c4 1 5 5 4 9l-8 2c0-6-3-7-5-6z" fill="#bbb" stroke="#444"/><path d="M2 9C1 4 6 2 8 6l2 9-8-3z" fill="#eee" stroke="#444"/><path d="M4 6l4 4" stroke="#b22" stroke-width="2"/></symbol>
<symbol id="revt" viewBox="0 0 20 20"><path d="M1 8h18M7 3v10M11 8v4" stroke="#e32b22" stroke-width="2.200" fill="none"/><path d="M3 18v-5M1.500 15L3 12.500l1.500 2.500M16 18v-5M14.500 15l1.500-2.500 1.500 2.500M16 4h-5M12.500 2l-2.500 2 2.500 2" stroke="#222" stroke-width="1.200" fill="none"/></symbol>
<symbol id="xy" viewBox="0 0 20 20"><path d="M2 5h5M4.500 2.500v5M8 2.500h4M10 .5v4M13 5h5M15.500 2.500v5M2 11l6 8M8 11l-6 8M12 11l3 4 3-4M15 14v5" stroke="#111" stroke-width="1.800" fill="none"/></symbol>
<symbol id="prop" viewBox="0 0 20 20"><path d="M1 6h14v13H1z" fill="#f5faff" stroke="#668"/><path d="M3 10h4v7H3zM9 10h4v7H9z" fill="#c5dcf0"/><path d="M4 5l4-4h8l4 3v4l-6 1-4 2-2-2 2-2z" fill="#e8c183" stroke="#8f6a30"/></symbol>
<symbol id="arcgis" viewBox="0 0 32 32"><circle cx="16" cy="16" r="15" fill="#0d3b66"/><circle cx="16" cy="16" r="14" fill="url(#earth)"/><path d="M20 4c5 1 8 5 8 11l-4 2-3-6zM5 9l5 12 8 7-6 1C5 26 1 17 5 9z" fill="#46a857"/><path d="M3 20c6 5 10 5 14 4l1 5c-7 2-13-3-15-9z" fill="#0a2746"/><path d="M19 20l10 9" stroke="#b9763e" stroke-width="4" stroke-linecap="round"/><circle cx="14" cy="13" r="8.500" fill="#a9d3e2" stroke="#eef4f6" stroke-width="2"/><path d="M9 14c3-7 8-5 9-3-4 0-6 3-9 3z" fill="#fff" opacity=".8"/></symbol>
</svg>

<header class="titlebar">
  <svg class="appicon"><use href="#arcgis"/></svg><span class="title">Untitled - ArcMap</span>
  <div class="winbtns">
    <svg viewBox="0 0 12 12"><path d="M0 6h12"/></svg>
    <svg viewBox="0 0 12 12"><path d="M.5 3h8.500v8.500H.5zM3 1h6.500l2 2v6.500" /></svg>
    <svg viewBox="0 0 12 12"><path d="M.5.5l11 11M11.500.5l-11 11"/></svg>
  </div>
</header>

<nav class="menubar"><span class="m1">File</span><span class="m2">Edit</span><span class="m3">View</span><span class="m4">Bookmarks</span><span class="m5">Insert</span><span class="m6">Selection</span><span class="m7">Geoprocessing</span><span class="m8">Customize</span><span class="m9">Windows</span><span class="m10">Help</span></nav>

<div class="toolbars">
<div class="row">
  <div class="tb t-tools"><i class="grip"></i>
    <i class="b"><svg><use href="#zin"/></svg></i><i class="b"><svg><use href="#zout"/></svg></i><i class="b on"><svg><use href="#hand"/></svg></i><i class="b"><svg><use href="#globe"/></svg></i><i class="s"></i>
    <i class="b"><svg><use href="#fixin"/></svg></i><i class="b"><svg><use href="#fixout"/></svg></i><i class="s"></i>
    <i class="b"><svg><use href="#back"/></svg></i><i class="b"><svg><use href="#fwd"/></svg></i><i class="s"></i>
    <i class="b"><svg><use href="#selfeat"/></svg></i><i class="d off"></i><i class="b"><svg><use href="#clear"/></svg></i><i class="s"></i>
    <i class="b"><svg><use href="#cursor"/></svg></i><i class="s"></i>
    <i class="b"><svg><use href="#info"/></svg></i><i class="b"><svg><use href="#bolt"/></svg></i><i class="b"><svg><use href="#note"/></svg></i><i class="s"></i>
    <i class="b"><svg><use href="#measure"/></svg></i><i class="s"></i>
    <i class="b"><svg><use href="#binoc"/></svg></i><i class="b"><svg><use href="#route"/></svg></i><i class="b"><svg><use href="#goxy"/></svg></i><i class="s"></i>
    <i class="b"><svg><use href="#clock"/></svg></i><i class="s"></i><i class="b"><svg><use href="#viewer"/></svg></i><i class="h"></i></div>
  <div class="tb t-layout"><i class="grip"></i>
    <i class="b"><svg><use href="#pgin"/></svg></i><i class="b"><svg><use href="#pgout"/></svg></i><i class="b"><svg><use href="#pghand"/></svg></i><i class="b"><svg><use href="#pgfull"/></svg></i><i class="b"><svg><use href="#pg11"/></svg></i><i class="s"></i>
    <i class="b"><svg><use href="#pgfi"/></svg></i><i class="b"><svg><use href="#pgfo"/></svg></i><i class="s"></i>
    <i class="b"><svg><use href="#pgb"/></svg></i><i class="b"><svg><use href="#pgf"/></svg></i>
    <div class="combo c-zoom off"><span>100%</span></div><i class="s"></i>
    <i class="b gon"><svg><use href="#draft"/></svg></i><i class="b"><svg><use href="#focus"/></svg></i><i class="b"><svg><use href="#chlay"/></svg></i><i class="b"><svg><use href="#ddp"/></svg></i><i class="h"></i></div>
  <div class="tb t-snap"><i class="grip"></i><span class="lbl l-snap">Snapping</span>
    <i class="b gon"><svg><use href="#sncirc"/></svg></i><i class="b gon"><svg><use href="#sngrid"/></svg></i><i class="b gon"><svg><use href="#snsq"/></svg></i><i class="b gon"><svg><use href="#snedge"/></svg></i><i class="h"></i></div>
</div>
<div class="row">
  <div class="tb t-geo"><i class="grip"></i><span class="lbl l-geo">Georeferencing</span><i class="s"></i>
    <div class="combo c-geo"><span>DEMNAS_1408-32_v1.0.tif</span></div>
    <i class="b"><svg><use href="#cp"/></svg></i><i class="b"><svg><use href="#wand"/></svg></i><i class="b"><svg><use href="#gcp"/></svg></i><i class="b"><svg><use href="#gcpz"/></svg></i><i class="b"><svg><use href="#gcpx"/></svg></i><i class="b"><svg><use href="#gvz"/></svg></i><i class="b"><svg><use href="#gtab"/></svg></i><i class="b"><svg><use href="#rot"/></svg></i><i class="d"></i><i class="field"></i><i class="h"></i></div>
  <div class="tb t-edit"><i class="grip"></i><span class="lbl l-edit">Editor</span><i class="s"></i>
    <i class="b"><svg><use href="#etool"/></svg></i><i class="b"><svg><use href="#eann"/></svg></i><i class="s"></i>
    <i class="b"><svg><use href="#line"/></svg></i><i class="b"><svg><use href="#arc"/></svg></i><i class="b"><svg><use href="#trace"/></svg></i><i class="d off"></i><i class="b"><svg><use href="#point"/></svg></i><i class="s"></i>
    <i class="b"><svg><use href="#verts"/></svg></i><i class="b"><svg><use href="#resh"/></svg></i><i class="b"><svg><use href="#cutp"/></svg></i><i class="b"><svg><use href="#split"/></svg></i><i class="b"><svg><use href="#rotg"/></svg></i><i class="s"></i>
    <i class="b"><svg><use href="#attr"/></svg></i><i class="b"><svg><use href="#sketch"/></svg></i><i class="s"></i><i class="b"><svg><use href="#feat"/></svg></i><i class="h"></i></div>
  <div class="tb t-topo"><i class="grip"></i>
    <i class="b"><svg><use href="#topo"/></svg></i><i class="s"></i><i class="b"><svg><use href="#tpsel"/></svg></i><i class="d off"></i><i class="s"></i>
    <i class="b"><svg><use href="#tpnet"/></svg></i><i class="b"><svg><use href="#tpcut"/></svg></i><i class="b"><svg><use href="#align"/></svg></i><i class="b"><svg><use href="#lsh"/></svg></i><i class="s"></i>
    <i class="b"><svg><use href="#box"/></svg></i><i class="s"></i><i class="b"><svg><use href="#val"/></svg></i><i class="b"><svg><use href="#val2"/></svg></i><i class="s"></i><i class="b"><svg><use href="#err"/></svg></i><i class="b"><svg><use href="#errw"/></svg></i><i class="h"></i></div>
</div>
<div class="row">
  <div class="tb t-std"><i class="grip"></i>
    <i class="b"><svg><use href="#new"/></svg></i><i class="b"><svg><use href="#open"/></svg></i><i class="b"><svg><use href="#save"/></svg></i><i class="b"><svg><use href="#print"/></svg></i><i class="s"></i>
    <i class="b"><svg><use href="#cut"/></svg></i><i class="b"><svg><use href="#copy"/></svg></i><i class="b"><svg><use href="#paste"/></svg></i><i class="b"><svg><use href="#xg"/></svg></i><i class="s"></i>
    <i class="b"><svg><use href="#undo"/></svg></i><i class="b"><svg><use href="#redo"/></svg></i><i class="s"></i><i class="b"><svg><use href="#add"/></svg></i><i class="d"></i><i class="s"></i>
    <div class="combo c-scale off"><span></span></div><i class="s"></i><i class="b on"><svg><use href="#edtb"/></svg></i><i class="s"></i>
    <i class="b"><svg><use href="#toc"/></svg></i><i class="b"><svg><use href="#cat"/></svg></i><i class="b"><svg><use href="#srch"/></svg></i><i class="b"><svg><use href="#tbx"/></svg></i><i class="b"><svg><use href="#py"/></svg></i><i class="s"></i><i class="b"><svg><use href="#model"/></svg></i><i class="h"></i></div>
  <div class="tb t-adv"><i class="grip"></i>
    <i class="b"><svg><use href="#sbox"/></svg></i><i class="b"><svg><use href="#fil"/></svg></i><i class="b"><svg><use href="#ext"/></svg></i><i class="b"><svg><use href="#trim"/></svg></i><i class="b"><svg><use href="#inter"/></svg></i><i class="s"></i>
    <i class="b"><svg><use href="#expl"/></svg></i><i class="b"><svg><use href="#sph"/></svg></i><i class="s"></i>
    <i class="b"><svg><use href="#gen"/></svg></i><i class="b"><svg><use href="#sync"/></svg></i><i class="b"><svg><use href="#wrench"/></svg></i><i class="b"><svg><use href="#rows"/></svg></i><i class="b"><svg><use href="#steps"/></svg></i><i class="s"></i>
    <i class="b"><svg><use href="#blob"/></svg></i><i class="b"><svg><use href="#blob2"/></svg></i><i class="h"></i></div>
</div>
<div class="row">
  <div class="tb t-draw"><i class="grip"></i><span class="lbl l-draw">Drawing</span>
    <i class="b"><svg><use href="#cursor"/></svg></i><i class="b"><svg><use href="#rotc"/></svg></i><i class="b"><svg><use href="#zsel"/></svg></i><i class="s"></i>
    <i class="b"><svg><use href="#rect"/></svg></i><i class="d"></i><i class="b serif big">A</i><i class="d"></i><i class="b"><svg><use href="#edv"/></svg></i><i class="s"></i>
    <div class="combo c-font box"><em>o</em><span>Arial</span></div><div class="combo c-size box"><span>10</span></div>
    <i class="b serif">B</i><i class="b serif it">I</i><i class="b serif un">U</i><i class="s"></i>
    <i class="b w ink k1 serif">A</i><i class="d w"></i><i class="b w ink k2"><svg><use href="#bucket"/></svg></i><i class="d w"></i><i class="b w ink k1"><svg><use href="#pen"/></svg></i><i class="d w"></i><i class="b w ink k3"><b class="dot"></b></i><i class="d w"></i><i class="h"></i></div>
</div>
<div class="row">
  <div class="tb t-pars"><i class="grip"></i>
    <i class="b"><svg><use href="#tri"/></svg></i><i class="b"><svg><use href="#trip"/></svg></i><i class="b"><svg><use href="#trim2"/></svg></i><i class="s"></i><i class="b"><svg><use href="#pencil"/></svg></i><i class="s"></i><i class="b"><svg><use href="#sel1"/></svg></i><i class="b"><svg><use href="#sel2"/></svg></i><i class="s"></i><i class="b"><svg><use href="#sketch"/></svg></i><i class="h"></i></div>
  <div class="tb t-eff"><i class="grip"></i><div class="layer c-eff"><svg><use href="#raster"/></svg><span>DEMNAS_1408-32_v1.0.tif</span><i class="btn"></i></div>
    <i class="b"><svg><use href="#contrast"/></svg></i><i class="b"><svg><use href="#sun"/></svg></i><i class="b"><svg><use href="#transp"/></svg></i><i class="b"><svg><use href="#swipe"/></svg></i><i class="s"></i><i class="b"><svg><use href="#flick"/></svg></i><i class="s"></i><i class="b"><svg><use href="#flash"/></svg></i>
    <div class="spin"><span>500</span><i class="ud"><b></b><b></b></i></div><i class="h"></i></div>
  <div class="tb t-class"><i class="grip"></i><span class="lbl l-class">Classification</span><i class="s"></i><div class="layer c-class"><svg><use href="#raster"/></svg><span>DEMNAS_1408-32_v1.0.tif</span><i class="btn"></i></div>
    <i class="b"><svg><use href="#icls"/></svg></i><i class="b"><svg><use href="#icl2"/></svg></i><i class="s"></i><i class="b"><svg><use href="#poly"/></svg></i><i class="d"></i><i class="b"><svg><use href="#pick"/></svg></i><i class="h"></i></div>
</div>
<div class="row">
  <div class="tb t-sun"><i class="grip"></i><i class="b pale"><svg><use href="#sun"/></svg></i><i class="h"></i></div>
  <div class="tb t-xy"><i class="grip"></i><span class="lbl l-xy">ADD POINT X,Y</span><i class="h"></i></div>
</div>
</div>

<main class="work">
  <section class="toc">
    <div class="toctitle"><span>Table Of Contents</span><svg class="pin" viewBox="0 0 12 14"><path d="M3 1h6v6.500H3zM.5 8h11M6 8v5M8 1v6" /></svg><svg class="x" viewBox="0 0 12 12"><path d="M1.500 1.500l9 9M10.500 1.500l-9 9"/></svg></div>
    <div class="toctools"><i class="b"><svg><use href="#order"/></svg></i><i class="b on"><svg><use href="#source"/></svg></i><i class="b"><svg><use href="#vis"/></svg></i><i class="b"><svg><use href="#selby"/></svg></i><i class="s"></i><i class="b"><svg><use href="#opts"/></svg></i></div>
    <div class="tree">
      <div class="n n0"><i class="ex"></i><svg><use href="#layers"/></svg><b>Layers</b></div>
      <div class="n n1"><i class="ex"></i><svg><use href="#folder"/></svg><span>D:\SEMESTER 4\PDS\ACARA 4B\HASIL\</span></div>
      <div class="n n2"><i class="ex"></i><i class="ck"><svg viewBox="0 0 12 12"><path d="M2 6l3 3 5.500-7"/></svg></i><span>Mosaic_DEMNAS.tif</span></div>
      <div class="n n3">Value</div>
      <div class="leg"><i class="ramp"></i><div><span>High : 786.988</span><span>Low : 73.3764</span></div></div>
      <div class="n n1"><i class="ex"></i><svg><use href="#folder"/></svg><span>D:\SEMESTER 4\PDS\ACARA 4B\BAHAN\</span></div>
      <div class="n n2"><i class="ex"></i><i class="ck"></i><span>DEMNAS_1408-32_v1.0.tif</span></div>
      <div class="n n3">Value</div>
      <div class="leg"><i class="ramp"></i><div><span>High</span><span>Low</span></div></div>
      <div class="n n2"><i class="ex"></i><i class="ck"></i><span>DEMNAS</span></div>
      <div class="n n3">Value</div>
      <div class="leg"><i class="ramp"></i><div><span>High</span><span>Low</span></div></div>
      <div class="n n1"><i class="ex"></i><svg><use href="#folder"/></svg><span>D:\SEMESTER</span><span class="tail">oordinat G</span></div>
      <div class="n nt"><svg><use href="#table"/></svg><span class="sel">Sheet2$</span></div>
      <div class="hs"><i></i></div>
    </div>
  </section>

  <section class="pane">
    <div class="canvas">
      <svg class="dem" viewBox="95 45 972 1474" preserveAspectRatio="none">
        <defs>
          <filter id="rough" x="-10%" y="-10%" width="120%" height="120%" color-interpolation-filters="sRGB"><feGaussianBlur stdDeviation="15 12" result="b"/><feTurbulence type="fractalNoise" baseFrequency=".022 .018" numOctaves="6" seed="7"/><feDisplacementMap in="b" scale="120" xChannelSelector="R" yChannelSelector="G"/></filter>
          <filter id="fine" x="-10%" y="-10%" width="120%" height="120%" color-interpolation-filters="sRGB"><feGaussianBlur stdDeviation="1.500" result="b"/><feTurbulence type="fractalNoise" baseFrequency=".035" numOctaves="4" seed="3"/><feDisplacementMap in="b" scale="40" xChannelSelector="R" yChannelSelector="G"/></filter>
          <filter id="tex" x="0" y="0" width="100%" height="100%" color-interpolation-filters="sRGB"><feTurbulence type="turbulence" baseFrequency=".006 .028" numOctaves="4" seed="12"/><feColorMatrix values="0 0 0 0 0 0 0 0 0 0 0 0 0 0 0 -4 0 0 0 .9"/></filter>
          <filter id="tex2" x="0" y="0" width="100%" height="100%" color-interpolation-filters="sRGB"><feTurbulence type="turbulence" baseFrequency=".02 .016" numOctaves="5" seed="5"/><feColorMatrix values="0 0 0 0 0 0 0 0 0 0 0 0 0 0 0 -4 0 0 0 1"/></filter>
          <filter id="soft" x="-50%" y="-50%" width="200%" height="200%" color-interpolation-filters="sRGB"><feGaussianBlur stdDeviation="42"/></filter>
          <radialGradient id="east" gradientUnits="userSpaceOnUse" cx="1120" cy="620" r="620"><stop offset="0" stop-color="#6a6a6a"/><stop offset=".2" stop-color="#515151"/><stop offset=".5" stop-color="#2b2b2b"/><stop offset=".8" stop-color="#0d0d0d"/><stop offset="1" stop-color="#030303"/></radialGradient>
          <linearGradient id="fadein" x1="0" x2="1"><stop offset=".45" stop-color="#000"/><stop offset=".7" stop-color="#fff"/></linearGradient>
          <linearGradient id="fadey" x1="0" y1="0" x2="0" y2="1"><stop offset=".5" stop-color="#000"/><stop offset=".58" stop-color="#fff"/><stop offset="1" stop-color="#bbb"/></linearGradient>
          <mask id="mE"><path d="M95 45h972v1130H95z" fill="url(#fadein)"/></mask>
          <mask id="mS"><path d="M95 45h972v1474H95z" fill="url(#fadey)"/></mask>
        </defs>
        <path d="M95 45h972v1474H95z" fill="#030303"/>
        <path d="M95 45h972v1474H95z" fill="url(#east)"/>
        <g filter="url(#soft)"><path d="M900 -30L1140 -30V380L1000 240z" fill="#454545"/><path d="M380 10h100l60 130-100 60-80-90z" fill="#1c1c1c"/><path d="M430 1120L1100 1130V1620H400z" fill="#171717"/></g>
        <g transform="rotate(6 900 600)"><path d="M0 0h1200v1130H0z" filter="url(#tex)" mask="url(#mE)" opacity=".4"/></g>
        <g filter="url(#fine)" fill="none" stroke="#0c0c0c" stroke-width="3.500" opacity=".6">
          <path d="M1090 230L960 240 880 130 840 70M1090 300L980 270 900 190M1090 360L1000 290M1090 520L960 480 850 410 720 400M1090 560L1000 510 860 460 700 440M1090 590L950 600 820 570 650 560M1090 680L960 685 830 660 640 640M1090 740L940 760 830 780 700 800M1090 800L980 830 860 850 800 830M1090 870L960 890 840 870M1090 920L960 930 840 900M1090 980L960 975 850 940M1090 1040L920 1020 810 985M1090 1100L950 1080 840 1060M700 800L840 860 830 940 780 1010 790 1070 900 1100 1067 1180"/>
        </g>
        <g filter="url(#rough)">
          <path d="M280 900L400 870 470 930 520 1010 740 1040 760 1090 620 1150 500 1240 430 1380 330 1400 110 1250 130 1160 190 1110 180 1040 210 980z" fill="#464646"/>
          <path d="M420 1250L560 1180 600 1250 560 1400 430 1420z" fill="#2a2a2a"/>
          <path d="M130 780L210 780 330 850 300 900 220 850z" fill="#3a3a3a"/><path d="M300 860L400 880 460 930 480 1010 400 1000 270 930z" fill="#8a8a8a"/>
          <path d="M310 800L400 850M450 790L510 820 480 870M420 850L480 920" stroke="#555" stroke-width="18" fill="none"/>
          <path d="M430 900L470 930 530 1000 640 1000 740 1035 750 1085 640 1085 530 1070 450 1020z" fill="#b5b5b5"/>
          <path d="M440 920L490 990 540 1030 600 1045 735 1060" stroke="#fff" stroke-width="46" fill="none"/>
          <path d="M540 960L570 1020M600 940L620 1020M575 1060L545 1190M660 1080L610 1180M530 1070L470 1170" stroke="#606060" stroke-width="28" fill="none"/>
          <path d="M700 1010L765 950" stroke="#aaa" stroke-width="22"/><path d="M700 815L790 860 830 890 800 960 700 960 690 880z" fill="#252525"/><path d="M705 820L730 860 780 860" stroke="#707070" stroke-width="24" fill="none"/>
          <path d="M30 1180L150 1170 240 1120 330 1170 350 1240 260 1300 230 1370 330 1420 350 1600H30z" fill="#a8a8a8"/>
          <path d="M100 1190L200 1180 290 1190 300 1240 200 1280 100 1290z" fill="#fff"/>
          <path d="M30 1300L190 1310 210 1410 330 1440 330 1600H30z" fill="#d8d8d8"/>
          <path d="M340 1290L420 1280 430 1380 370 1390z" fill="#757575"/><path d="M390 1200L450 1230 450 1280 390 1260z" fill="#5c5c5c"/>
          <path d="M110 1080L180 1050 200 1090 130 1110zM150 1010L190 990 170 1030z" fill="#6b6b6b"/>
          <path d="M790 1160L860 1150 960 1160 1130 1180V1310L970 1290 890 1240 820 1190z" fill="#5c5c5c"/>
          <path d="M930 1200L990 1190 1130 1190 1050 1250 960 1270z" fill="#a8a8a8"/>
          <path d="M780 1370L950 1370 1130 1390V1600H860L900 1460z" fill="#484848"/><path d="M950 1420L1130 1400V1510L1000 1490z" fill="#787878"/>
          <path d="M880 1540L950 1480 1010 1560z" fill="#fff"/><path d="M1030 1340L1110 1360V1430z" fill="#7a7a7a"/>
        </g>
        <g filter="url(#fine)" fill="none" stroke="#1c1c1c" stroke-width="7" opacity=".75">
          <path d="M320 1180L390 1210 370 1280 330 1320 240 1330M330 1320L360 1380 420 1390 500 1385M390 1270L450 1280 510 1260M430 1190L500 1250M1060 1260L1030 1300M960 1260L900 1290M890 1430L1000 1440 1067 1450M920 1470L990 1500"/>
          <path d="M330 1430L440 1430M320 1470L420 1470M250 1000L330 1060M400 960L380 1060 360 1150M430 1040L400 1130M490 1060L440 1110M570 1090L560 1180M610 1070L600 1160" stroke-width="4"/>
        </g>
        <path d="M95 45h972v1474H95z" filter="url(#tex2)" mask="url(#mS)" opacity=".33"/>
        <path d="M95 45H358V47H95zM95 238h4v1281h-4z" fill="#fff"/>
      </svg>
    </div>
    <div class="vs"><i></i></div>
    <div class="viewbar"><i class="vb on"><svg viewBox="0 0 14 16"><path d="M1 1h12v14H1z" fill="#cfe19a" stroke="#333" stroke-width="2"/><path d="M3 12l7-8v9z" fill="#6c9a3b"/></svg></i><i class="vb"><svg viewBox="0 0 14 16"><path d="M2 1h7l4 4v10H2z" fill="#fff" stroke="#444" stroke-width="1.800"/><path d="M5 7h5M5 10h5" stroke="#37c" stroke-width="1.500"/></svg></i><i class="vsep"></i><i class="vb"><svg viewBox="0 0 16 16"><path d="M2 7c1-6 9-7 11-2M14 9c-1 6-9 7-11 2" fill="none" stroke="#1f4f91" stroke-width="2"/><path d="M14 1v6H9zM2 15V9h5z" fill="#1f4f91"/></svg></i><i class="vb"><svg viewBox="0 0 14 16"><path d="M4 3v10M10 3v10" stroke="#2260b4" stroke-width="3"/></svg></i><i class="ht"></i></div>
  </section>

  <aside class="side">
    <div class="tab"><svg><use href="#cat"/></svg><span>Catalog</span></div>
    <div class="tab t2"><svg><use href="#srch"/></svg><span>Search</span></div>
  </aside>
</main>

<div class="status"><i class="p1"></i><i class="p2"></i><span>425400.879&nbsp; 9137532.078 Decimal Degrees</span></div>

<footer class="taskbar">
  <div class="weather"><svg viewBox="0 0 30 36"><path d="M4 7l20 4v20L4 36z" fill="#c9500f"/><path d="M4 7h5v28l-5 1z" fill="#e0782c"/><path d="M0 18c8-3 14 3 25 0M0 25c8-3 14 3 25 0M0 32c8-3 14 3 25-1" fill="none" stroke="#f08a48" stroke-width="2.400"/><circle cx="20" cy="10" r="9.800" fill="#c42b1c"/></svg><b>4</b><div><span>Air: Poor</span><small>Friday</small></div></div>
  <svg class="start" viewBox="0 0 29 29"><defs><linearGradient id="wn" x1="0" y1="0" x2="1" y2="1"><stop offset="0" stop-color="#4fd2ff"/><stop offset="1" stop-color="#0067d0"/></linearGradient></defs><path d="M1 0h13v14H0V1zM15 0h13l1 1v13H15zM0 15h14v14H1l-1-1zM15 15h14v13l-1 1H15z" fill="url(#wn)"/></svg>
  <div class="search"><svg class="mag" viewBox="0 0 20 20"><circle cx="8.500" cy="8.500" r="7" /><path d="M13.500 13.500l5 5"/></svg><span>Search</span>
    <svg class="deco" viewBox="0 0 58 30"><circle cx="29" cy="15.500" r="13" fill="#69a8f5"/><path d="M19 8c4-6 12-7 15-4l3 5-4 4-3-2-3 2 6 1 2 4-3 5-2 5-4-1-1-6-6-3zM37 14l4-2v5z" fill="#3c8c22"/><g fill="#f9b81f"><circle cx="7" cy="6" r="3.500"/><circle cx="3" cy="10" r="3.500"/><circle cx="11" cy="9" r="3.500"/><circle cx="5" cy="14" r="3.500"/><circle cx="10" cy="13" r="3"/><circle cx="14" cy="3" r="2.200"/><circle cx="50" cy="7" r="2.500"/><circle cx="54" cy="5" r="2.500"/><circle cx="55" cy="9" r="2.500"/><circle cx="51" cy="10" r="2"/></g><circle cx="7" cy="10" r="2" fill="#dc6410"/><path d="M3 18c7 0 10 3 12 9-7 1-11-2-12-9zM42 0c6 3 8 7 5 12-5-3-7-7-5-12zM57 13c0 8-5 13-14 13 1-8 6-12 14-13z" fill="#7cab24"/><path d="M40 29l12-12" stroke="#4e7d18"/></svg></div>
  <div class="apps">
    <i><svg viewBox="0 0 30 30"><path d="M0 8h23v20H0z" fill="#2e2e2e"/><path d="M8 0h22v20H8z" fill="#fff" opacity=".75"/><path d="M8 8h15v12H8z" fill="#c2c2c2"/></svg></i>
    <i><svg viewBox="0 0 30 30"><defs><linearGradient id="co" x1="0" y1="0" x2="0" y2="1"><stop offset="0" stop-color="#1683ea"/><stop offset=".5" stop-color="#29b487"/><stop offset="1" stop-color="#f3d318"/></linearGradient><linearGradient id="co2" x1="0" y1="0" x2="0" y2="1"><stop offset="0" stop-color="#9a4be8"/><stop offset=".5" stop-color="#ee4c92"/><stop offset="1" stop-color="#ffad58"/></linearGradient></defs><path d="M8 2h12l-7 18H3c-4 0-3-4-2-7l3-8c1-2 2-3 4-3z" fill="url(#co)"/><path d="M22 28H10l7-18h10c4 0 3 4 2 7l-3 8c-1 2-2 3-4 3z" fill="url(#co2)"/><path d="M13 2h6c2 0 3 3 4 8h-7z" fill="#243fbd"/><path d="M8 20h6l-3 8c-2 0-3-4-3-8z" fill="#f26a31"/><path d="M17 10l-4 10" stroke="#fff" stroke-width="2.500"/></svg></i>
    <i><svg viewBox="0 0 30 30"><path d="M15 15L2 7.500A15 15 0 0 1 28 7.500z" fill="#e33b2e"/><path d="M15 15V0A15 15 0 0 1 28 7.500H15z" fill="#e33b2e"/><path d="M15 15l13-7.500A15 15 0 0 1 15 30z" fill="#fcc21b"/><path d="M15 15L2 7.500A15 15 0 0 0 15 30l6.500-11z" fill="#2a9a48"/><circle cx="15" cy="15" r="7.200" fill="#fff"/><circle cx="15" cy="15" r="5.700" fill="#3a7ff0"/></svg></i>
    <i class="run"><svg viewBox="0 0 30 30"><defs><linearGradient id="eg" x1="0" y1="0" x2="1" y2=".4"><stop offset="0" stop-color="#1b9ddb"/><stop offset=".5" stop-color="#2bc4ce"/><stop offset="1" stop-color="#62e052"/></linearGradient></defs><path d="M0 15C0 6 7 0 15 0c9 0 15 6 15 12 0 5-4 8-9 8-4 0-4-2-2-4 0-5-5-8-10-6-5 1-8 3-9 5z" fill="url(#eg)"/><path d="M0 15c1-6 10-8 15-4-7 0-6 10 0 14 4 2 9 1 12-1-3 5-8 6-12 6C6 30 0 23 0 15z" fill="#1267b8"/><path d="M9 18c0-4 2-6 5-7-4 6 0 12 6 13 3 0 6-1 8-2-3 6-8 8-11 7-5-1-8-6-8-11z" fill="#0b4b93"/></svg></i>
    <i class="run"><svg viewBox="0 0 30 30"><path d="M0 3l1-1h9l3 3h-2v3H0z" fill="#dc9c0d"/><path d="M0 7h11l2-2h17v22l-1 1H1l-1-1z" fill="#fcca43"/><path d="M5 28v-5q0-2 2-2h16q2 0 2 2v5z" fill="#147bd1"/><path d="M9 25h12" stroke="#0b4a8c" stroke-width="1.500"/></svg></i>
    <i><svg viewBox="0 0 30 30"><circle cx="16" cy="6" r="4.500" fill="#7b83eb"/><circle cx="25" cy="7.500" r="3.300" fill="#5059c9"/><path d="M20 12h10v8c0 5-8 5-9 1z" fill="#5059c9"/><path d="M8 12h15v9c0 9-13 9-15 1z" fill="#7b83eb"/><path d="M0 7h15v15H0z" fill="#4950b8"/></svg><b>T</b></i>
    <i><svg viewBox="0 0 30 30"><defs><linearGradient id="as" x1="1" y1="0" x2="0" y2="1"><stop offset="0" stop-color="#10aaff"/><stop offset="1" stop-color="#5a10f0"/></linearGradient></defs><path d="M0 0h30v30H0z" fill="url(#as)"/><path d="M3 22L10 7h4L7 22zM10 22l8-15h6v11h-4v-6l-6 10zM20 20h4v2h-4z" fill="#e9e9ff"/></svg></i>
    <i class="run"><svg viewBox="0 0 30 30"><path d="M6 1h24v7H6z" fill="#41a5ee"/><path d="M6 8h24v7H6z" fill="#2b7cd3"/><path d="M6 15h24v7H6z" fill="#185abd"/><path d="M6 22h24v6H6z" fill="#103f91"/><path d="M0 7h15v16H0z" fill="#185abd"/></svg><b>W</b></i>
    <i class="run cur"><svg><use href="#arcgis"/></svg></i>
    <i class="run"><svg viewBox="0 0 30 30"><path d="M6 1h12v7H6z" fill="#21a366"/><path d="M18 1h12v7H18z" fill="#33c481"/><path d="M6 8h12v7H6z" fill="#107c41"/><path d="M18 8h12v7H18z" fill="#21a366"/><path d="M6 15h24v7H6z" fill="#107c41"/><path d="M6 22h24v6H6z" fill="#185c37"/><path d="M0 7h15v16H0z" fill="#107c41"/></svg><b>X</b></i>
  </div>
  <div class="tray">
    <svg class="up" viewBox="0 0 14 8"><path d="M1 7l6-6 6 6"/></svg>
    <svg class="wifi" viewBox="0 0 20 16"><path d="M1 6c5-6 13-6 18 0M4 9c4-4 8-4 12 0M7 12c2-2 4-2 6 0"/><circle cx="10" cy="14" r="1.500" fill="#111" stroke="none"/></svg>
    <svg class="vol" viewBox="0 0 20 16"><path d="M1 5h4l4-4v14l-4-4H1zM11 5c2 2 2 4 0 6"/><path d="M14 3c3 3 3 7 0 10M16.500 1c4 4 4 10 0 14" stroke="#c4c4c4"/></svg>
    <svg class="bat" viewBox="0 0 20 16"><path d="M3 4v9q0 2 2 2h10q2 0 2-2V6q0-2-2-2H8"/><path d="M5 6h10v7H5zM18 7h2v5h-2zM3 0L0 6h3l-2 5 6-7H4l2-4z" fill="#111" stroke="none"/></svg>
    <div class="time"><span>12:00 PM</span><span>4/22/2025</span></div>
  </div>
</footer>

<div class="ctx">
  <div class="mi"><svg><use href="#table"/></svg><span>Open</span></div>
  <div class="mi sub"><i></i><span>Joins and Relates</span></div><hr>
  <div class="mi"><svg><use href="#remove"/></svg><span>Remove</span></div><hr>
  <div class="mi sub"><i></i><span>Data</span></div><hr>
  <div class="mi sub"><i></i><span>Edit Features</span></div><hr>
  <div class="mi"><svg><use href="#mail"/></svg><span>Geocode Addresses...</span></div>
  <div class="mi"><svg><use href="#revt"/></svg><span>Display Route Events...</span></div>
  <div class="mi hot"><svg><use href="#xy"/></svg><span>Display XY Data...</span></div><hr>
  <div class="mi"><svg><use href="#prop"/></svg><span>Properties...</span></div>
</div>
<div class="tip"><b>Display XY Data</b><p>Adds a new map layer based on<br>XY events from a table.</p></div>
</body>
</html>
```
FILE: styles.css
```css
* { box-sizing: border-box; }
body { margin: 0; width: 1920px; height: 1080px; overflow: hidden; position: relative; display: flex; flex-direction: column; font: 14px/20px "Noto Sans", "Open Sans", sans-serif; letter-spacing: -.07px; color: #16161c; background: linear-gradient(90deg, #f0f0f0, #fdfdfd); }
i { font-style: normal; }
.sprite { position: absolute; width: 0; height: 0; }
.g { fill: none; stroke: #b3b3b3; stroke-width: 1.2; }
.g2 { fill: none; stroke: #adadad; stroke-width: 1.8; }

.titlebar { height: 29px; flex: none; background: #f2f2f2; display: flex; align-items: center; padding: 0 0 1px 2px; }
.appicon { width: 20px; height: 20px; }
.title { margin-left: 6px; color: #000; letter-spacing: .15px; }
.winbtns { margin-left: auto; display: flex; gap: 46px; margin-right: 26px; }
.winbtns svg { width: 12px; height: 12px; fill: none; stroke: #111; stroke-width: 1.1; }
.menubar { height: 32px; flex: none; padding-left: 15px; display: flex; align-items: center; }
.menubar span { flex: none; white-space: nowrap; }
.m1 { width: 43px; } .m2 { width: 45px; } .m3 { width: 51px; } .m4 { width: 93px; } .m5 { width: 57px; } .m6 { width: 80px; } .m7 { width: 117px; } .m8 { width: 91px; } .m9 { width: 80px; }

.toolbars { height: 194px; flex: none; }
.row { height: 32.5px; display: flex; }
.tb { height: 31px; flex: none; display: flex; align-items: center; border-radius: 3px; background: linear-gradient(#fbfbfb, #f9f9f9 60%, #efefef); }
.t-tools { margin-left: 4px; width: 655px; } .t-layout { margin-left: 5px; width: 479px; } .t-snap { margin-left: 6px; width: 216px; }
.t-geo { margin-left: 46px; width: 712px; } .t-edit { margin-left: 4px; width: 520px; } .t-topo { margin-left: 4px; width: 378px; }
.t-std { margin-left: 4px; width: 770px; } .t-adv { margin-left: 11px; width: 432px; }
.t-draw { margin-left: 13px; width: 858px; }
.t-pars { margin-left: 4px; width: 239px; } .t-eff { margin-left: 4px; width: 505px; } .t-class { margin-left: 4px; width: 496px; }
.t-sun { margin-left: 348px; width: 52px; } .t-xy { margin-left: 18px; width: 149px; }
.grip { width: 8px; height: 20px; flex: none; background: radial-gradient(circle at 4.5px 2px, #b9b9b9 1.3px, transparent 1.8px) 0 0 / 8px 4.8px; }
.t-layout .grip { width: 9px; }
.b { width: 27.5px; height: 27px; flex: none; display: flex; align-items: center; justify-content: center; color: #111; }
.b svg { width: 20px; height: 20px; flex: none; }
.pale { opacity: .7; }
.on { background: #d8e8f5; border: 2px solid #2487d6; }
.gon { background: #dde8f2; border: 1.5px solid #aeb4b9; }
.s { width: 7.5px; height: 18px; flex: none; background: linear-gradient(#c3c3c3, #c3c3c3) 3px 0 / 1.5px 100% no-repeat; }
.d { width: 14.5px; flex: none; height: 20px; display: flex; align-items: center; justify-content: center; }
.d::after, .lbl::after { content: ""; border: 4px solid transparent; border-top: 4.5px solid #000; border-bottom: 0; margin-top: 1px; }
.d.off::after { border-top-color: #aaa; }
.h { width: 14px; height: 31px; margin-left: auto; flex: none; background: linear-gradient(#f4f4f4, #dadada 40%, #a9a9a9); display: flex; flex-direction: column; align-items: center; padding-top: 18px; }
.h::before { content: ""; width: 7px; height: 2px; background: #111; margin-bottom: 2px; }
.h::after { content: ""; border: 4px solid transparent; border-top: 4.5px solid #000; border-bottom: 0; }
.lbl { display: flex; flex: none; align-items: center; justify-content: space-between; padding: 0 6px 0 7px; white-space: nowrap; letter-spacing: -.17px; }
.l-snap { width: 83px; padding-right: 4px; } .l-geo { width: 121px; } .l-edit { width: 59px; letter-spacing: 0; } .l-draw { width: 74px; padding-right: 3px; } .l-class { width: 107px; } .l-xy { width: 127px; padding: 0 7px 0 3px; letter-spacing: .28px; }
.combo { height: 26px; flex: none; background: #fff; border: 1.5px solid #c9c9c9; display: flex; align-items: center; white-space: nowrap; padding: 0 6px 0 4px; }
.combo::after { content: ""; margin: -4px 1px 0 auto; width: 8px; height: 8px; border: solid #6d6d6d; border-width: 0 1.3px 1.3px 0; transform: rotate(45deg) scale(.9); }
.combo.off::after { border-color: #bbb; }
.combo.box { border-color: #8f8f8f; }
.c-zoom { width: 75px; } .c-zoom span { background: #0c79d8; color: #3a5c86; height: 16px; line-height: 15px; width: 34px; letter-spacing: -.6px; }
.c-geo { width: 225px; margin-left: 1px; letter-spacing: -.33px; }
.c-scale { width: 185px; background: #fff; } .c-scale span { width: 158px; height: 20px; background: #efefef; }
.c-font { width: 213px; letter-spacing: -.7px; } .c-font em { width: 15px; height: 18px; background: #d6e6f7; border: 1px solid #7ba0cf; font: italic bold 14px/15px "Liberation Serif", serif; color: #0a5c2a; text-align: center; margin-right: 6px; }
.c-size { width: 57px; margin-left: 1px; letter-spacing: -.4px; }
.field { width: 92px; height: 22px; border: 1.5px solid #5d5d5d; background: #fff; margin-left: 3px; }
.serif { font: bold 18px/20px "Liberation Serif", serif; color: #1a1a1a; letter-spacing: 0; }
.big { font-size: 24px; color: #333; } .it { font-style: italic; } .un { text-decoration: underline; }
.ink { flex-direction: column; }
.t-draw .ink { padding-bottom: 2px; border-bottom: 3.5px solid #000; height: 25px; width: 22px; margin: 0 1px 0 4px; }
.ink svg { height: 17px; } .t-draw .k2 { border-color: #fbf7b3; } .t-draw .k3 { border-color: #5bff00; }
.dot { width: 7px; height: 7px; border-radius: 50%; background: #0b0bc8; }
.d.w { width: 20.5px; }
.layer { height: 24px; flex: none; display: flex; align-items: center; background: #fff; border: 2px solid #7c7c7c; border-right-color: #d8d8d8; border-bottom-color: #e4e4e4; white-space: nowrap; letter-spacing: -.05px; }
.layer svg { width: 20px; height: 20px; margin-right: 5px; flex: none; }
.btn { width: 21px; height: 20px; margin-left: auto; background: #f0f0f0; border: 1px solid #fff; border-right-color: #777; border-bottom-color: #777; display: flex; align-items: center; justify-content: center; }
.btn::after { content: ""; border: 5px solid transparent; border-top-color: #000; border-bottom: 0; }
.c-eff { width: 223px; margin: 0 2px 0 1px; } .c-class { width: 224px; margin: 0 1px 0 1px; }
.spin { width: 74px; height: 25px; border: 1px solid #ccc; background: #fff; display: flex; justify-content: space-between; padding-left: 3px; line-height: 22px; }
.ud { width: 22px; background: #f0f0f0; border: 1px solid #b5b5c0; display: flex; flex-direction: column; justify-content: space-around; align-items: center; }
.ud b { border: 4px solid transparent; border-bottom-color: #333; border-top: 0; } .ud b + b { border: 4px solid transparent; border-top-color: #333; border-bottom: 0; }

.work { height: 739px; flex: none; display: flex; }
.toc { width: 431px; flex: none; }
.toctitle { height: 25px; background: linear-gradient(90deg, #9bb5d5, #b9d0ea); display: flex; align-items: center; padding: 1px 0 0 5px; color: #1c2b40; letter-spacing: .05px; }
.toctitle .pin { width: 10px; height: 14px; margin-left: auto; fill: none; stroke: #111; stroke-width: 1.5; margin-bottom: 3px; } .toctitle .x { width: 12px; height: 12px; margin: 0 5px 2px 9px; stroke: #111; stroke-width: 2; }
.toctools { height: 33px; display: flex; align-items: center; padding: 0 0 1px 4.5px; background: linear-gradient(#fafafa, #f6f6f6); }
.tree { height: 681px; width: 430px; background: #fff; border: 1.5px solid #8f96a3; padding: 1px 0 1px; overflow: hidden; display: flex; flex-direction: column; letter-spacing: -.03px; }
.n { height: 22.5px; flex: none; display: flex; align-items: center; white-space: nowrap; padding-bottom: 1px; }
.n svg { width: 19px; height: 18px; flex: none; }
.ex { width: 11px; height: 11px; flex: none; border: 1px solid #9a9a9a; border-radius: 1px; background: linear-gradient(#3c63b5, #3c63b5) center / 5px 1px no-repeat, #f5f5f5; margin-top: 3px; }
.n0 { padding-left: 10px; } .n0 svg { margin: 0 7px 0 8.5px; } .n0 b { color: #000; letter-spacing: -.5px; }
.n1 { padding-left: 34px; } .n1 svg { margin: 0 6px 0 8.5px; } .n1 span { letter-spacing: .28px; }
.n2 { padding-left: 57.5px; } .n3 { padding-left: 126.5px; padding-bottom: 0; }
.ck { width: 14px; height: 14px; border: 1.5px solid #222; margin: 1px 10px 0 10.5px; flex: none; display: flex; } .n .ck svg { width: 11px; height: 11px; fill: none; stroke: #111; stroke-width: 2.2; }
.leg { height: 90px; flex: none; display: flex; padding-left: 97px; }
.ramp { width: 17px; height: 45px; background: linear-gradient(#f2f2f2, #777 45%, #000 95%); }
.leg div { margin-left: 6px; height: 65px; margin-top: -3px; display: flex; flex-direction: column; justify-content: space-between; }
.n1 .tail { margin: 0 1px 0 auto; letter-spacing: .15px; }
.nt { padding-left: 75px; } .n.nt svg { width: 18px; height: 16px; }
.sel { background: #0a78d7; color: #fff; height: 22.5px; line-height: 21px; margin-left: 7px; padding: 0 3px; }
.hs { margin-top: auto; height: 20px; flex: none; background: #f0f0f0; display: flex; align-items: center; padding-left: 22px; }
.hs i { width: 308px; height: 2.5px; background: #8a8a8a; border-radius: 2px; }

.pane { margin-left: 6px; width: 1454px; flex: none; display: grid; grid-template: 716px 20px / 1432px 20px; border: 2px solid #8a8a8a; border-width: 3px 1px 0 2px; border-right-color: #e2e2e2; background: #efefef; height: 739px; overflow: hidden; }
.canvas { background: #fff; border: 1px solid #eee; border-width: 0 2px 2px 0; padding: 32px 0 0 552px; }
.dem { width: 325px; height: 649px; display: block; }
.vs { display: flex; justify-content: center; padding-top: 51px; } .vs i { width: 2.5px; height: 22px; background: #858585; margin-right: 3px; }
.viewbar { grid-column: 1 / 3; display: flex; align-items: center; height: 16px; }
.vb { width: 20.5px; height: 17px; display: flex; align-items: center; justify-content: center; } .vb svg { width: 11px; height: 12px; }
.vb.on { border: 1px solid #97ccf5; background: #cbe7fc; border-radius: 2px; }
.vsep { width: 1px; height: 15px; background: #999; margin: 0 7px 0 3px; }
.ht { margin-left: auto; width: 275px; height: 2.5px; background: #8a8a8a; margin-right: 44px; }
.side { padding: 3px 0 0 4px; flex: 1; }
.tab { height: 89px; border: 1.5px solid #b5b5b5; border-right: 0; border-radius: 5px 0 0 5px; background: #f4f4f4; display: flex; flex-direction: column; align-items: center; padding-top: 5px; color: #666; }
.t2 { height: 85px; } .tab svg { width: 20px; height: 20px; flex: none; } .tab span { writing-mode: vertical-rl; margin-top: 4px; font-size: 15px; letter-spacing: 0; }

.status { height: 26px; flex: none; background: linear-gradient(90deg, #efefef 85%, #f7f7f7); display: flex; align-items: center; justify-content: flex-end; padding: 2px 46px 0 0; }
.status i { width: 25px; height: 22px; border-left: 1px solid #fafafa; } .status .p2 { width: 7px; } .status span { width: 271px; white-space: nowrap; letter-spacing: -.27px; }

.taskbar { height: 60px; flex: none; border-top: 1.5px solid #bcbcbc; background: #eee; display: flex; align-items: center; font-size: 14px; }
.weather { width: 530px; padding-left: 28px; display: flex; margin-top: -2px; position: relative; }
.weather svg { width: 32px; height: 37px; } .weather b { position: absolute; left: 45px; top: 0; color: #fff; font-size: 12px; } .weather div { margin-left: 4px; display: flex; flex-direction: column; letter-spacing: .1px; } .weather small { font-size: 14px; color: #5a5a5a; }
.start { width: 29px; height: 29px; }
.search { width: 273px; height: 39px; margin-left: 18px; border: 1px solid #d8d8d8; border-bottom-color: #bbb; border-radius: 20px; background: #fafafa; display: flex; align-items: center; padding: 0 6px 0 13px; font-size: 16px; letter-spacing: 0; color: #5b5b5b; }
.mag { width: 18px; height: 18px; margin-right: 13px; fill: none; stroke: #222; stroke-width: 2.2; } .deco { width: 56px; height: 29px; margin-left: auto; }
.apps { display: flex; margin-left: 3.5px; }
.apps i { width: 55px; height: 48px; display: flex; align-items: center; justify-content: center; position: relative; } .apps svg { width: 30px; height: 30px; }
.apps b { position: absolute; left: 13px; top: 14px; width: 14px; text-align: center; color: #fff; font-size: 12px; }
.run::after { content: ""; position: absolute; bottom: 0; width: 8px; height: 4px; border-radius: 2px; background: #8b8b8b; }
.apps .cur { width: 49px; margin: 0 3px; background: #f8f8f8; border: 1px solid #e6e6e6; border-radius: 5px; } .cur::after { width: 20px; background: #0f9bc4; }
.tray { margin-left: auto; display: flex; align-items: center; padding-right: 24px; } .tray svg { fill: none; stroke: #222; stroke-width: 1.5; }
.up { width: 13px; height: 8px; margin-right: 24px; } .wifi { width: 20px; height: 16px; margin-right: 10px; } .vol { width: 20px; height: 16px; margin-right: 10px; } .bat { width: 20px; height: 16px; }
.time { width: 90px; text-align: right; display: flex; flex-direction: column; letter-spacing: .15px; margin-top: -2px; }

.ctx { position: absolute; left: 128px; top: 549px; width: 234px; height: 271px; background: linear-gradient(90deg, #f4f4f4, #ebebeb 32px, #fcfcfc 33px); border: 1px solid #777; padding: 1px; box-shadow: 4px 4px 4px #0006; overflow: hidden; }
.mi { height: 27.5px; display: flex; align-items: center; padding-left: 5px; white-space: nowrap; } .mi svg, .mi i { width: 20px; height: 20px; margin-right: 17px; }
.mi.sub::after { content: ""; border: 5px solid transparent; border-left-color: #000; border-right: 0; margin: 0 10px 0 auto; }
.mi.hot { background: #b3d6f2; border: 1.5px solid #1e84da; margin: 0 1px; padding-left: 3px; }
.ctx hr { margin: 1px 0 1.8px 41px; border: 0; height: 1px; background: #c3c3c3; }
.tip { position: absolute; left: 165px; top: 799px; width: 241px; height: 90px; background: linear-gradient(#fff, #c9d7ee); border: 1px solid #767676; border-radius: 2px; box-shadow: 4px 4px 3px #0007; padding: 8px 0 0 6px; color: #575757; white-space: nowrap; }
.tip p { margin: 10px 0 0 9px; line-height: 18.5px; letter-spacing: 0; }
```
